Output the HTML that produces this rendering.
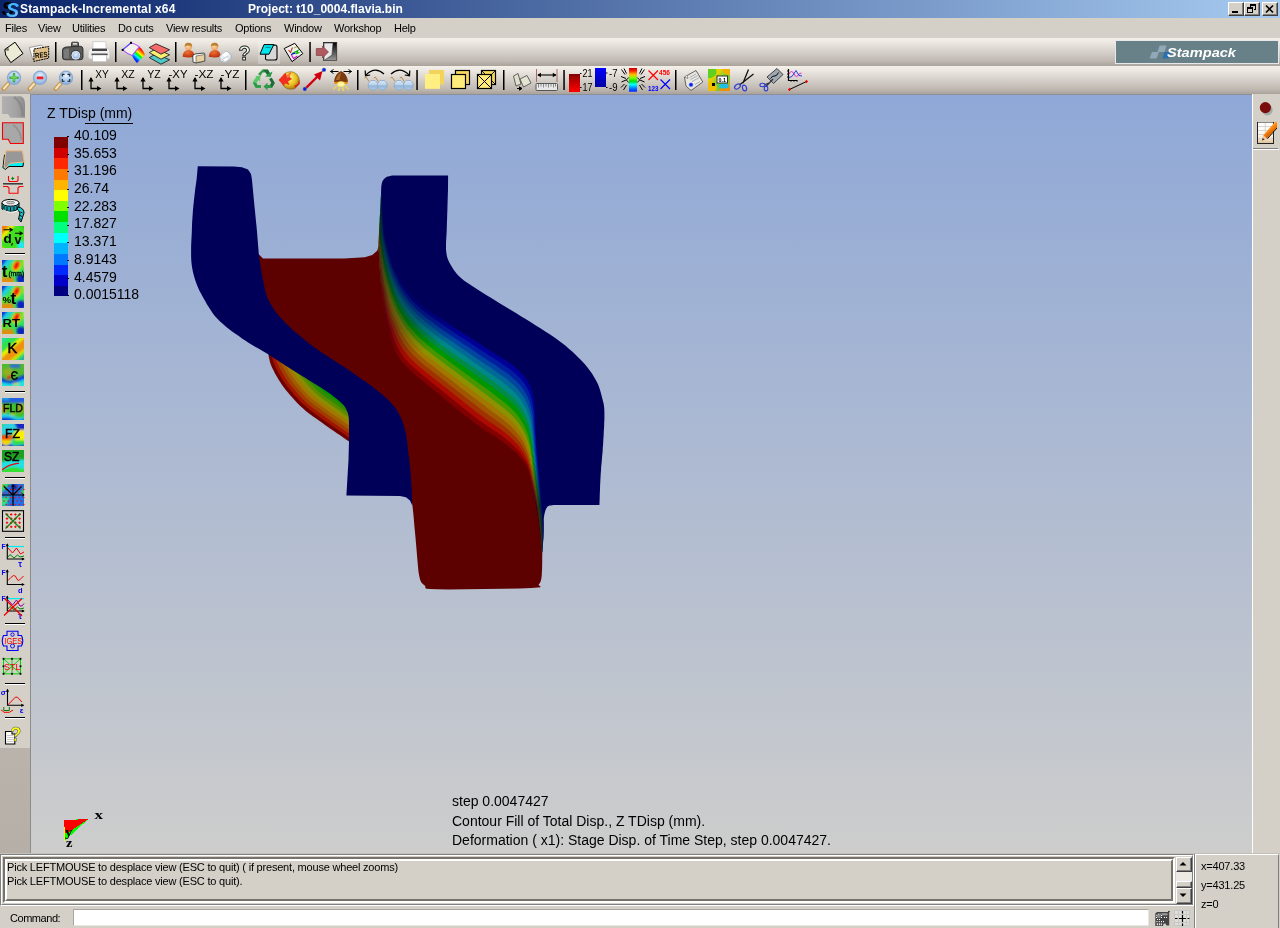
<!DOCTYPE html>
<html><head><meta charset="utf-8"><title>Stampack-Incremental x64</title>
<style>
*{box-sizing:border-box;margin:0;padding:0}
html,body{width:1280px;height:928px;overflow:hidden;background:#d4d0c8;font-family:"Liberation Sans",sans-serif;}
body{position:relative}
.abs{position:absolute}
body>div{will-change:transform}
#title{left:0;top:0;width:1280px;height:18px;background:linear-gradient(90deg,#0a246a 0%,#a6caf0 100%);}
#title .t{position:absolute;top:2px;color:#fff;font-weight:bold;font-size:12px;line-height:14px;white-space:nowrap}
#menu{left:0;top:18px;width:1280px;height:20px;background:#d4d0c8;font-size:11px;color:#000}
#menu span{position:absolute;top:4px;line-height:13px;white-space:nowrap;letter-spacing:-0.25px}
.tb{left:0;width:1280px;height:28px;background:linear-gradient(180deg,#f4f0ea 0%,#ebe7e0 18%,#d5d0c9 50%,#bfb9b2 82%,#aaa39c 100%)}
#tb1{top:38px}
#tb2{top:66px}
#left{left:0;top:94px;width:31px;height:759px;background:linear-gradient(180deg,#d4d0c8 0,#d4d0c8 654px,#b9b3ab 654px,#b5afa7 100%);border-right:1px solid #8c8c8c}
#right{left:1252px;top:94px;width:28px;height:759px;background:#d4d0c8;border-left:1px solid #fff}
#view{left:31px;top:94px;width:1221px;height:759px;background:linear-gradient(180deg,#8fa8d7 0%,#cdcdcc 100%)}
#bottom{left:0;top:853px;width:1280px;height:75px;background:#d4d0c8}
.vt{position:absolute;font-size:14px;line-height:16px;color:#000;white-space:nowrap}
.msg{font-size:11px;line-height:14px;color:#000;white-space:nowrap;letter-spacing:-0.2px}
.sbtn{background:#d4d0c8;border:1px solid #fff;border-right-color:#404040;border-bottom-color:#404040;box-shadow:inset -1px -1px 0 #808080}
.wbtn{width:16px;height:14px;background:#d4d0c8;border:1px solid #fff;border-right-color:#404040;border-bottom-color:#404040;box-shadow:inset -1px -1px 0 #808080}
.wbtn svg{position:absolute;left:0;top:0}
</style></head><body>
<div id="title" class="abs"><svg class="abs" style="left:0;top:0" width="20" height="18" viewBox="0 0 20 18"><defs><linearGradient id="sg" x1="0" y1="0" x2="1" y2="1"><stop offset="0" stop-color="#38c8ff"/><stop offset=".6" stop-color="#48b0ff"/><stop offset="1" stop-color="#a8e0ff"/></linearGradient></defs>
<text x="1.5" y="15" font-family="Liberation Sans,sans-serif" font-weight="bold" font-style="italic" font-size="19" fill="#000" textLength="12.5" lengthAdjust="spacingAndGlyphs">S</text>
<text x="6" y="16.8" font-family="Liberation Sans,sans-serif" font-weight="bold" font-style="italic" font-size="21" fill="url(#sg)" textLength="13" lengthAdjust="spacingAndGlyphs">S</text></svg>
<div class="abs wbtn" style="left:1228px;top:2px"><svg width="14" height="12" viewBox="0 0 14 12" shape-rendering="crispEdges"><rect x="3" y="8" width="6" height="2" fill="#000"/></svg></div>
<div class="abs wbtn" style="left:1244px;top:2px"><svg width="14" height="12" viewBox="0 0 14 12" shape-rendering="crispEdges"><path d="M5 1h6v2h-6zM5 3h1v2h-1zM10 3h1v4h-2v-1h1zM2 4h6v2h-6zM2 6h1v4h-1zM7 6h1v4h-1zM2 9h6v1h-6z" fill="#000"/></svg></div>
<div class="abs wbtn" style="left:1262px;top:2px"><svg width="14" height="12" viewBox="0 0 14 12"><path d="M3 2.5 L10 9.5 M10 2.5 L3 9.5" stroke="#000" stroke-width="1.7"/></svg></div>
<span class="t" style="left:20px;letter-spacing:0.17px">Stampack-Incremental x64</span><span class="t" style="left:248px;letter-spacing:0.03px">Project: t10_0004.flavia.bin</span></div>
<div id="menu" class="abs"><span style="left:5px">Files</span><span style="left:38px">View</span><span style="left:72px">Utilities</span><span style="left:118px">Do cuts</span><span style="left:166px">View results</span><span style="left:235px">Options</span><span style="left:284px">Window</span><span style="left:334px">Workshop</span><span style="left:394px">Help</span></div>
<div id="tb1" class="abs tb"><svg class="abs" style="left:0;top:0" width="1280" height="28" viewBox="0 38 1280 28">
<defs>
<linearGradient id="rbw" gradientUnits="userSpaceOnUse" x1="142.5" y1="50" x2="134" y2="60"><stop offset="0" stop-color="#f00"/><stop offset=".2" stop-color="#ff8000"/><stop offset=".35" stop-color="#ff0"/><stop offset=".5" stop-color="#0e0"/><stop offset=".65" stop-color="#0ff"/><stop offset=".8" stop-color="#06f"/><stop offset="1" stop-color="#00f"/></linearGradient>
<linearGradient id="door" x1="0" y1="0" x2="0" y2="1"><stop offset="0" stop-color="#000"/><stop offset="1" stop-color="#999"/></linearGradient>
<radialGradient id="skin" cx=".4" cy=".4" r=".7"><stop offset="0" stop-color="#ffd8a8"/><stop offset="1" stop-color="#e89858"/></radialGradient>
<radialGradient id="shirt" cx=".4" cy=".3" r=".8"><stop offset="0" stop-color="#f07030"/><stop offset="1" stop-color="#b02808"/></radialGradient>
<radialGradient id="lens" cx=".5" cy=".4" r=".6"><stop offset="0" stop-color="#e8f2ff"/><stop offset="1" stop-color="#7fa8e0"/></radialGradient>
</defs>
<path d="M15 42.2 L23 53.5 L10.8 62.6 L5.7 55 L4.8 49.5 Z" fill="#ebebd6" stroke="#000" stroke-width="1"/>
<path d="M5 49.5 L8.3 50.2 L7.6 47" fill="none" stroke="#000" stroke-width=".7"/>
<path d="M29.3 47.6 L41 45.2 L43 46.5 L43 58 L33 60Z" fill="#fff" stroke="#888" stroke-width=".8"/>
<path d="M34 49 L48.7 46.5 L48.7 58.2 L33.8 61.4Z" fill="#e0bf88" stroke="#000" stroke-width="1" stroke-dasharray="2 0.7"/>
<text x="35" y="57.6" font-family="Liberation Sans,sans-serif" font-weight="bold" font-size="7.5" fill="#000" textLength="12.5" lengthAdjust="spacingAndGlyphs" transform="rotate(-6 41 55)">RES</text>
<rect x="55.0" y="42" width="1.5" height="20" fill="#000"/>
<rect x="71.5" y="42.2" width="7" height="5.5" rx="1" fill="#6a6a6a" stroke="#222" stroke-width=".8"/>
<rect x="73" y="43" width="4" height="1.6" fill="#ddd"/>
<path d="M62.5 50 Q62.5 47.5 66 47 L80 46.2 Q83 46.2 83 49 L83 57.5 Q83 59.8 80 59.8 L65.5 59.8 Q62.5 59.8 62.5 57.5Z" fill="#5a5a5a" stroke="#222" stroke-width=".8"/>
<path d="M63.5 50 Q66 48 69 48.5 L69 58.5 L64 58.5Z" fill="#7a7a7a"/>
<circle cx="75.8" cy="55" r="5" fill="#333"/><circle cx="75.8" cy="55.3" r="4" fill="url(#lens)" stroke="#fff" stroke-width=".8"/>
<rect x="93" y="41.8" width="13" height="7.5" fill="#fff" stroke="#bbb" stroke-width=".6"/>
<rect x="88.3" y="48.5" width="21.5" height="10.5" rx="2.5" fill="#eee" stroke="#c8c8c8" stroke-width=".7"/>
<rect x="92" y="48.7" width="15" height="2.3" fill="#444"/>
<rect x="91.5" y="53.6" width="16" height="1.6" fill="#333"/>
<rect x="92.5" y="55" width="14" height="6.8" fill="#fff" stroke="#aaa" stroke-width=".6"/>
<rect x="115.0" y="42" width="1.5" height="20" fill="#000"/>
<path d="M132 55.5 L139.3 46.8 Q143.5 50 144.8 55 L137 63 Q133.5 59.5 132 55.5Z" fill="url(#rbw)"/>
<path d="M122.6 49.8 L131 42.8 Q136 44 139.3 46.8 L132 55.5 Q127 53.5 122.6 49.8Z" fill="#f4f0ea" stroke="#b050ff" stroke-width="1.1"/>
<path d="M122.6 49.8 L131 42.8" stroke="#5050ff" stroke-width="1.1"/>
<rect x="121.7" y="48.9" width="2" height="2" fill="#000"/><rect x="130" y="41.8" width="2" height="2" fill="#000"/>
<path d="M156 53.8 L169.6 59.8 L161 64.2 L149.3 57.6Z" fill="#50c8c8" stroke="#222" stroke-width=".9"/>
<path d="M156 48.8 L169.6 54.8 L161 59.2 L149.3 52.6Z" fill="#f8f070" stroke="#222" stroke-width=".9"/>
<path d="M156 43.8 L169.6 49.8 L161 54.2 L149.3 47.6Z" fill="#f86a6a" stroke="#222" stroke-width=".9"/>
<rect x="175.0" y="42" width="1.5" height="20" fill="#000"/>
<path d="M182.6 56.8 Q183.0 50 188.6 50 Q194.2 50 194.6 56.8 Q188.6 58.2 182.6 56.8Z" fill="url(#shirt)"/>
<circle cx="188.4" cy="46.6" r="3.7" fill="url(#skin)"/>
<path d="M184.6 46.5 Q185.0 42.3 188.6 42.8 Q192.0 42.6 192.2 46.8 Q188.5 44.5 184.6 46.5Z" fill="#b8822c"/>
<path d="M208.8 56.8 Q209.2 50 214.8 50 Q220.4 50 220.8 56.8 Q214.8 58.2 208.8 56.8Z" fill="url(#shirt)"/>
<circle cx="214.6" cy="46.6" r="3.7" fill="url(#skin)"/>
<path d="M210.8 46.5 Q211.2 42.3 214.8 42.8 Q218.2 42.6 218.4 46.8 Q214.7 44.5 210.8 46.5Z" fill="#b8822c"/>
<path d="M192.8 55.5 L195 54 L204 53 L204.8 54.5 L204.8 61 L196 63 L193 62Z" fill="#fff" stroke="#222" stroke-width=".8"/>
<path d="M196 56 L204.6 54.5 L204.6 61 L196 62.7Z" fill="#e8d0a0" stroke="#444" stroke-width=".6"/>
<path d="M219.5 56 L227 51 L231 55 L231 59 L225 63 L220.5 60.5Z" fill="#e6eef4" stroke="#9ab" stroke-width=".7"/>
<path d="M222 54.5 L226.5 51.5 L229 54 L224.5 57Z" fill="#fff"/>
<path d="M222.5 59.5 L227.5 56.5 L229.5 59 L225 62Z" fill="#fff" stroke="#99a" stroke-width=".5"/>
<text x="238.6" y="60.2" font-family="Liberation Sans,sans-serif" font-weight="bold" font-size="21" fill="#f4fff4" stroke="#222" stroke-width="1" textLength="12" lengthAdjust="spacingAndGlyphs">?</text>
<rect x="258" y="41" width="22" height="23" fill="#fff" opacity=".22"/>
<path d="M266 46 L275 45 Q277 45 277 47 L277 58 Q277 60 275 60 L267 60 Q265.5 60 265.5 58.5Z" fill="#d8d8d8" stroke="#000" stroke-width="1.1"/>
<path d="M264 44.6 L273.8 44.6 L269 54.2 L260 54.2Z" fill="#00e6ee" stroke="#000" stroke-width="1"/>
<path d="M265.5 47.3 L270.5 47.3" stroke="#088" stroke-width="1"/>
<path d="M294.8 43.3 L302.8 53.6 L292 61.6 L284.2 48.5Z" fill="#f0f0e8" stroke="#000" stroke-width="1"/>
<path d="M288.5 50 L290.5 52.5 L292.5 47.5" fill="none" stroke="#c03030" stroke-width="1.1"/>
<path d="M294 48 L297 46.5" stroke="#a0a040" stroke-width="1"/>
<path d="M292 53.5 L298 50.5 L296.5 53.5 L299.5 52.5" fill="none" stroke="#00b000" stroke-width="1.1"/>
<path d="M291.5 55 L293.5 58.5 L297.5 56" fill="none" stroke="#d000d0" stroke-width="1.1"/>
<path d="M291 54.5 L295.5 53" fill="none" stroke="#0000e0" stroke-width="1.1"/>
<rect x="309.3" y="42" width="1.5" height="20" fill="#000"/>
<rect x="323.5" y="42.3" width="13.3" height="18" fill="url(#door)" stroke="#222" stroke-width=".6"/>
<path d="M324 43 L333 43 L332 55 L324 60.5Z" fill="#e8e8e8" stroke="#333" stroke-width=".6"/>
<path d="M316.3 48.5 L322.5 48.5 L322.5 46 L328.5 52 L322.5 58 L322.5 55.5 L316.3 55.5Z" fill="#b05a60" stroke="#7a3038" stroke-width=".6"/>
<rect x="1115.5" y="40.5" width="163" height="23" fill="#688088" stroke="#e8e8e8" stroke-width="1"/>
<path d="M1159.5 45.5 L1166.5 45.5 L1164.5 52 L1157.5 52Z" fill="#90a8b8"/><path d="M1152 52 L1159 52 L1156.5 58.5 L1149.5 58.5Z" fill="#90a8b8"/><path d="M1164.5 52 L1171 52 L1168.5 58.5 L1162.5 58.5Z" fill="#2a70b0"/>
<text x="1167" y="57.3" font-family="Liberation Sans,sans-serif" font-weight="bold" font-style="italic" font-size="13.2" fill="#fff" textLength="69" lengthAdjust="spacingAndGlyphs">Stampack</text>
</svg></div>
<div id="tb2" class="abs tb"><svg class="abs" style="left:0;top:0" width="1280" height="28" viewBox="0 66 1280 28">
<defs>
<radialGradient id="glass" cx=".5" cy=".35" r=".65"><stop offset="0" stop-color="#eaf3fc"/><stop offset=".6" stop-color="#a8c8ec"/><stop offset="1" stop-color="#88b0e0"/></radialGradient>
<linearGradient id="redg" x1="0" y1="0" x2="0" y2="1"><stop offset="0" stop-color="#800000"/><stop offset=".5" stop-color="#c80000"/><stop offset="1" stop-color="#ff0000"/></linearGradient>
<linearGradient id="blug" x1="0" y1="0" x2="0" y2="1"><stop offset="0" stop-color="#0000ff"/><stop offset="1" stop-color="#0000a0"/></linearGradient>
<linearGradient id="rb2" x1="0" y1="0" x2="0" y2="1"><stop offset="0" stop-color="#c00000"/><stop offset=".12" stop-color="#ff2000"/><stop offset=".28" stop-color="#ffc000"/><stop offset=".42" stop-color="#80ff00"/><stop offset=".55" stop-color="#00e000"/><stop offset=".7" stop-color="#00ffff"/><stop offset=".85" stop-color="#0080ff"/><stop offset="1" stop-color="#0020ff"/></linearGradient>
<radialGradient id="sph" cx=".4" cy=".35" r=".7"><stop offset="0" stop-color="#ffff80"/><stop offset=".6" stop-color="#e8c020"/><stop offset="1" stop-color="#a07010"/></radialGradient>
<linearGradient id="gl2" x1="0" y1="0" x2="0" y2="1"><stop offset="0" stop-color="#dce8f4"/><stop offset=".5" stop-color="#b8d0e8"/><stop offset=".55" stop-color="#90b4d8"/><stop offset="1" stop-color="#b0cce8"/></linearGradient>
<linearGradient id="cmap" x1="0" y1="0" x2="1" y2="1"><stop offset="0" stop-color="#c8e000"/><stop offset=".3" stop-color="#e8d000"/><stop offset=".6" stop-color="#60d040"/><stop offset="1" stop-color="#f0a000"/></linearGradient>
</defs>
<path d="M8.5 83.5 L3.5 89" stroke="#c89850" stroke-width="4.2" stroke-linecap="round"/>
<path d="M8.0 84 L4.0 88.5" stroke="#f4e4c0" stroke-width="2" stroke-linecap="round"/>
<circle cx="14" cy="77.8" r="6.6" fill="url(#glass)" stroke="#8aa8d0" stroke-width="1.2"/>
<path d="M34.5 83.5 L29.5 89" stroke="#c89850" stroke-width="4.2" stroke-linecap="round"/>
<path d="M34.0 84 L30.0 88.5" stroke="#f4e4c0" stroke-width="2" stroke-linecap="round"/>
<circle cx="40" cy="77.8" r="6.6" fill="url(#glass)" stroke="#8aa8d0" stroke-width="1.2"/>
<path d="M60.5 83.5 L55.5 89" stroke="#c89850" stroke-width="4.2" stroke-linecap="round"/>
<path d="M60.0 84 L56.0 88.5" stroke="#f4e4c0" stroke-width="2" stroke-linecap="round"/>
<circle cx="66" cy="77.8" r="6.6" fill="url(#glass)" stroke="#8aa8d0" stroke-width="1.2"/>
<path d="M14 74.3 V81.3 M10.5 77.8 H17.5" stroke="#38a838" stroke-width="2.6" stroke-linecap="round"/>
<path d="M14 75 V80.6 M11.2 77.8 H16.8" stroke="#80e070" stroke-width="1.1" stroke-linecap="round"/>
<rect x="36.8" y="76.6" width="6.6" height="2.6" rx=".8" fill="#e81828" stroke="#f88" stroke-width=".4"/>
<path d="M62.3 76.5 V74.4 H64.5 M67.5 74.4 H69.7 V76.5 M69.7 79 V81.2 H67.5 M64.5 81.2 H62.3 V79" fill="none" stroke="#222" stroke-width="1.1"/>
<rect x="81.0" y="70" width="1.5" height="20" fill="#000"/>
<path d="M91.0 78 V88.5 H98.0" fill="none" stroke="#000" stroke-width="1.3"/>
<path d="M88.4 81.5 L91.0 77 L93.6 81.5Z M97.0 86 L101.5 88.5 L97.0 91Z" fill="#000"/>
<text x="95.2" y="77.5" font-family="Liberation Sans,sans-serif" font-size="10.5" fill="#000" textLength="13.5" lengthAdjust="spacingAndGlyphs">XY</text>
<path d="M117.0 78 V88.5 H124.0" fill="none" stroke="#000" stroke-width="1.3"/>
<path d="M114.4 81.5 L117.0 77 L119.6 81.5Z M123.0 86 L127.5 88.5 L123.0 91Z" fill="#000"/>
<text x="121.2" y="77.5" font-family="Liberation Sans,sans-serif" font-size="10.5" fill="#000" textLength="13.5" lengthAdjust="spacingAndGlyphs">XZ</text>
<path d="M143.0 78 V88.5 H150.0" fill="none" stroke="#000" stroke-width="1.3"/>
<path d="M140.4 81.5 L143.0 77 L145.6 81.5Z M149.0 86 L153.5 88.5 L149.0 91Z" fill="#000"/>
<text x="147.2" y="77.5" font-family="Liberation Sans,sans-serif" font-size="10.5" fill="#000" textLength="13.5" lengthAdjust="spacingAndGlyphs">YZ</text>
<path d="M169.0 78 V88.5 H176.0" fill="none" stroke="#000" stroke-width="1.3"/>
<path d="M166.4 81.5 L169.0 77 L171.6 81.5Z M175.0 86 L179.5 88.5 L175.0 91Z" fill="#000"/>
<text x="168.5" y="77.5" font-family="Liberation Sans,sans-serif" font-size="10.5" fill="#000" textLength="19" lengthAdjust="spacingAndGlyphs">-XY</text>
<path d="M195.0 78 V88.5 H202.0" fill="none" stroke="#000" stroke-width="1.3"/>
<path d="M192.4 81.5 L195.0 77 L197.6 81.5Z M201.0 86 L205.5 88.5 L201.0 91Z" fill="#000"/>
<text x="194.5" y="77.5" font-family="Liberation Sans,sans-serif" font-size="10.5" fill="#000" textLength="19" lengthAdjust="spacingAndGlyphs">-XZ</text>
<path d="M221.0 78 V88.5 H228.0" fill="none" stroke="#000" stroke-width="1.3"/>
<path d="M218.4 81.5 L221.0 77 L223.6 81.5Z M227.0 86 L231.5 88.5 L227.0 91Z" fill="#000"/>
<text x="220.5" y="77.5" font-family="Liberation Sans,sans-serif" font-size="10.5" fill="#000" textLength="19" lengthAdjust="spacingAndGlyphs">-YZ</text>
<rect x="245.0" y="70" width="1.5" height="20" fill="#000"/>
<path d="M258 74 L262.5 69.5 L268 69.5 L270 73 L272.5 71.5 L270.5 77 L265 76.5 L267 75 L265.5 72.5 L262.5 72.5 L260.5 76Z" fill="#2a9a48"/>
<path d="M263 69.8 L267.8 69.8 L269.6 73 L267.3 74.5 L265.5 72.3Z" fill="#1f6a38"/>
<path d="M271.5 77.5 L274.8 83 L272 88 L267.5 88 L267.5 90.5 L263.5 86.5 L267.5 82.8 L267.5 85 L270 85 L271.3 82.8 L269 79Z" fill="#2a9a48"/>
<path d="M271.8 78 L274.6 83 L272 87.5 L270.2 85 L271.5 82.8 L269.5 79.5Z" fill="#1f6a38"/>
<path d="M256.5 76.5 L252.5 82.5 L255.5 88 L261 88 L261 85 L257.5 85 L256.5 82.8 L258.5 80 L260 81.5 L260.5 75.8 L255 76 Z" fill="#58c868"/>
<path d="M253 82.8 L255.7 87.7 L261 87.7 L261 85.2 L257.3 85.2 L256.2 82.8Z" fill="#2a9a48"/>
<circle cx="290.5" cy="80.5" r="8.8" fill="url(#sph)" stroke="#806010" stroke-width=".6"/>
<path d="M278.5 80 L285.5 72.5 L286.5 75.5 L291 72 L289.5 77 L292 79 L288 81.5 L289.5 85 L285 83.5 L284 86Z" fill="#f03020"/>
<path d="M285.5 72.5 L286.5 75.5 L291 72 L289.5 77 L287 78Z" fill="#ff7840"/>
<path d="M291.5 91.5 L299.8 84 L299.5 79.5 L297.5 84 L294 86 L296 88Z" fill="#d82818"/>
<path d="M305.5 88.5 L318 76" stroke="#d00010" stroke-width="2.4"/>
<path d="M314 74.5 L322.5 71 L320 80.5 Z" fill="#d00010"/>
<path d="M322 71.5 L324 69.8" stroke="#222" stroke-width="1"/>
<circle cx="304.8" cy="89" r="1.9" fill="#0020e0" stroke="#88a" stroke-width=".5"/><circle cx="324" cy="69.8" r="1.9" fill="#0020e0" stroke="#88a" stroke-width=".5"/>
<path d="M330.5 71.5 H338.5 M343.5 71.5 H351.5 M330.5 71.5 l3 -2 M330.5 71.5 l3 2 M351.5 71.5 l-3 -2 M351.5 71.5 l-3 2" stroke="#000" stroke-width="1" fill="none"/>
<path d="M334 82 Q334.5 74 341 71 Q347.5 74 348 82 Z" fill="#7a3a10"/>
<path d="M336 80 Q337 75 341 72.5 Q340 77 339.5 80Z" fill="#b06828"/>
<rect x="334.5" y="81.8" width="13" height="2" fill="#f08000"/>
<ellipse cx="341" cy="84.2" rx="3.8" ry="2.6" fill="#fff8a0" stroke="#f0d040" stroke-width=".6"/>
<path d="M336.5 86 L333.5 89.5 M339.5 87.5 L338.5 91 M342.5 87.5 L343.5 91 M345.5 86 L348.5 89.5" stroke="#ffe030" stroke-width="1.1"/>
<rect x="357.0" y="70" width="1.5" height="20" fill="#000"/>
<path d="M366.0 75 Q375.0 66 384.0 74" fill="none" stroke="#000" stroke-width="1.2"/>
<path d="M365.2 70.5 L365.5 75.8 L370.2 75" fill="none" stroke="#000" stroke-width="1.2"/>
<path d="M364.5 78 l1.5 -1 l3 4.5" fill="none" stroke="#b88848" stroke-width="1"/>
<path d="M373.8 78 l1.5 -1 l3 4.5" fill="none" stroke="#b88848" stroke-width="1"/>
<path d="M371.0 80.5 h4 l2.7 2.7 v4 l-2.7 2.7 h-4 l-2.7 -2.7 v-4Z" fill="url(#gl2)" stroke="#88a8cc" stroke-width=".8"/>
<path d="M380.3 80.5 h4 l2.7 2.7 v4 l-2.7 2.7 h-4 l-2.7 -2.7 v-4Z" fill="url(#gl2)" stroke="#88a8cc" stroke-width=".8"/>
<path d="M391.0 74 Q400.0 66 409.0 75" fill="none" stroke="#000" stroke-width="1.2"/>
<path d="M409.8 70.5 L409.5 75.8 L404.8 75" fill="none" stroke="#000" stroke-width="1.2"/>
<path d="M390.5 78 l1.5 -1 l3 4.5" fill="none" stroke="#b88848" stroke-width="1"/>
<path d="M399.8 78 l1.5 -1 l3 4.5" fill="none" stroke="#b88848" stroke-width="1"/>
<path d="M397.0 80.5 h4 l2.7 2.7 v4 l-2.7 2.7 h-4 l-2.7 -2.7 v-4Z" fill="url(#gl2)" stroke="#88a8cc" stroke-width=".8"/>
<path d="M406.3 80.5 h4 l2.7 2.7 v4 l-2.7 2.7 h-4 l-2.7 -2.7 v-4Z" fill="url(#gl2)" stroke="#88a8cc" stroke-width=".8"/>
<rect x="416.3" y="70" width="1.5" height="20" fill="#000"/>
<rect x="429" y="70" width="15" height="14.5" fill="#f2d45a"/><rect x="425" y="74" width="15" height="14.8" fill="#ffee82"/>
<rect x="455.5" y="70.5" width="14" height="14" fill="#f6d860" stroke="#000" stroke-width="1.2"/><rect x="451.5" y="74.5" width="14" height="14" fill="#ffea7a" stroke="#000" stroke-width="1.2"/>
<rect x="481.5" y="70.5" width="14" height="14" fill="#f6d860" stroke="#000" stroke-width="1.2"/><path d="M481.5 70.5 L495.5 84.5 M495.5 70.5 L488 78" stroke="#000" stroke-width=".9"/><rect x="477.5" y="74.5" width="14" height="14" fill="#ffea7a" stroke="#000" stroke-width="1.2"/><path d="M477.5 74.5 L491.5 88.5 M491.5 74.5 L477.5 88.5" stroke="#000" stroke-width="1"/>
<rect x="503.0" y="70" width="1.5" height="20" fill="#000"/>
<path d="M513.5 76 L518 73.5 L521 84 L516 86Z" fill="#e0e0cc" stroke="#444" stroke-width=".8"/>
<path d="M520 79 L527 75.5 L531 83 L523.5 87Z" fill="#e4e4d0" stroke="#444" stroke-width=".8"/>
<path d="M517 88.5 H521 M519.5 86.8 L522 88.5 L519.5 90.2Z" stroke="#000" stroke-width="1" fill="#000"/>
<path d="M536.5 69 V82 M557 69 V82" stroke="#a06060" stroke-width=".9"/>
<path d="M538 75 H556" stroke="#000" stroke-width="1.1"/><path d="M537.2 75 L541 72.8 V77.2Z M556.5 75 L552.8 72.8 V77.2Z" fill="#000"/>
<rect x="536" y="83.5" width="21.5" height="7" rx="1" fill="#e8e8e8" stroke="#555" stroke-width="1"/>
<path d="M538.5 84 v3.5 M541 84 v2.5 M543.5 84 v3.5 M546 84 v2.5 M548.5 84 v3.5 M551 84 v2.5 M553.5 84 v3.5 M555.5 84 v2.5" stroke="#888" stroke-width="1"/>
<rect x="563.3" y="70" width="1.5" height="20" fill="#000"/>
<rect x="569" y="74" width="11" height="18" fill="url(#redg)"/>
<rect x="595" y="68" width="11" height="19" fill="url(#blug)"/>
<text x="582.5" y="76.6" font-family="Liberation Sans,sans-serif" font-size="10" fill="#000" textLength="10.0" lengthAdjust="spacingAndGlyphs">21</text>
<text x="582.5" y="90.8" font-family="Liberation Sans,sans-serif" font-size="10" fill="#000" textLength="10.0" lengthAdjust="spacingAndGlyphs">17</text>
<text x="609.0" y="76.6" font-family="Liberation Sans,sans-serif" font-size="10" fill="#000" textLength="8.5" lengthAdjust="spacingAndGlyphs">-7</text>
<text x="609.0" y="91.0" font-family="Liberation Sans,sans-serif" font-size="10" fill="#000" textLength="8.5" lengthAdjust="spacingAndGlyphs">-9</text>
<rect x="580" y="73" width="1.5" height="1" fill="#000"/><rect x="580" y="87" width="1.5" height="1" fill="#000"/><rect x="606" y="72.5" width="1.5" height="1" fill="#000"/><rect x="606" y="87" width="1.5" height="1" fill="#000"/>
<rect x="629" y="68" width="8" height="23.7" fill="url(#rb2)"/>
<path d="M621.5 69.5 L625 74.5 M624 68.5 L626.5 73.5 M621 76.5 L626 78.5 M621.5 82 L626 80 M621 87.5 L624.5 84 M623.5 90 L626.5 85 M628.8 77.5 L626.3 80 L628.8 82.5" stroke="#000" stroke-width="1" fill="none"/>
<path d="M644.5 69.5 L641 74.5 M642 68.5 L639.5 73.5 M645 76.5 L640 78.5 M644.5 82 L640 80 M645 87.5 L641.5 84 M642.5 90 L639.5 85 M637.2 77.5 L639.7 80 L637.2 82.5" stroke="#000" stroke-width="1" fill="none"/>
<path d="M648.5 70.5 L658 80 M658 70.5 L648.5 80" stroke="#f00" stroke-width="1.2"/>
<path d="M660.5 79.5 L670 89 M670 79.5 L660.5 89" stroke="#00f" stroke-width="1.2"/>
<text x="659.0" y="75.3" font-family="Liberation Sans,sans-serif" font-size="6.5" fill="#f00" textLength="11.0" lengthAdjust="spacingAndGlyphs" font-weight="bold">456</text>
<text x="648.0" y="90.5" font-family="Liberation Sans,sans-serif" font-size="6.5" fill="#00f" textLength="10.5" lengthAdjust="spacingAndGlyphs" font-weight="bold">123</text>
<rect x="675.0" y="70" width="1.5" height="20" fill="#000"/>
<path d="M684.5 77 L696 70.5 L702.8 82 L691 90.5 L686 86Z" fill="#e8e8e0" stroke="#555" stroke-width=".9"/>
<path d="M689.5 77.5 L696 74 M690.5 79.5 L697.5 75.8 M692 81.5 L699 77.8 M695 84.5 L700 81.5" stroke="#99a" stroke-width=".8"/>
<path d="M684.8 77.2 L688 78.5 L687 75.6" fill="#fff" stroke="#555" stroke-width=".6"/>
<circle cx="691" cy="84.8" r="2" fill="#0020f0" stroke="#88f" stroke-width=".5"/>
<rect x="708" y="69" width="22" height="22" fill="url(#cmap)"/>
<path d="M708 69 h8 q2 5 -3 8 q-3 2 -5 1Z" fill="#60d020"/><path d="M722 69 h8 v6 q-5 1 -8 -6Z" fill="#f0b000"/><path d="M708 82 q5 -2 8 3 q2 4 -1 6 h-7Z" fill="#f0c000"/><path d="M719 91 q3 -5 11 -4 v4Z" fill="#f09000"/><ellipse cx="724" cy="86" rx="5" ry="2.5" fill="#20c0e0"/>
<rect x="717" y="76" width="10.5" height="7" fill="#fff" stroke="#333" stroke-width="1"/>
<text x="718.5" y="82.0" font-family="Liberation Sans,sans-serif" font-size="6" fill="#000" textLength="7.5" lengthAdjust="spacingAndGlyphs" font-weight="bold">0.1</text>
<rect x="712" y="83" width="3" height="3" fill="#000"/>
<path d="M748.5 69.5 L743 83 M753.5 74 L739.5 85" stroke="#111" stroke-width="1.3" fill="none"/>
<ellipse cx="737.5" cy="86.5" rx="3.2" ry="2" fill="none" stroke="#3040d0" stroke-width="1.2" transform="rotate(-35 737.5 86.5)"/><ellipse cx="744.5" cy="88" rx="2" ry="3" fill="none" stroke="#3040d0" stroke-width="1.2" transform="rotate(-15 744.5 88)"/>
<path d="M767 77 L777 68.5 L783 74.5 L773.5 83.5Z" fill="#a0a8b0" stroke="#333" stroke-width=".9"/>
<path d="M770.5 78.5 q2 -3 4 -2.5 t4 -3.5" fill="none" stroke="#000" stroke-width="1"/>
<path d="M773 79 L766 86.5 M770 82.5 L764 85" stroke="#334" stroke-width="1.2"/>
<ellipse cx="762.5" cy="85" rx="2.6" ry="1.7" fill="none" stroke="#3040d0" stroke-width="1.1"/><ellipse cx="766" cy="88.5" rx="1.8" ry="2.4" fill="none" stroke="#3040d0" stroke-width="1.1"/>
<path d="M788.5 69 V80.5 H797.5" fill="none" stroke="#000" stroke-width="1.2"/>
<path d="M787 71 h1.5 M787 74 h1.5 M787 77 h1.5 M791 80.5 v1.3 M794 80.5 v1.3 M797 80.5 v1.3" stroke="#000" stroke-width=".9"/>
<path d="M789 74 q2.5 -5 5 0 t5 0 l2.5 -1" fill="none" stroke="#f020d0" stroke-width="1"/>
<path d="M789 77.5 l3 -1 l4 -6 l3 5 l3 .5" fill="none" stroke="#2040f0" stroke-width="1"/>
<path d="M789.5 89.5 L806.5 81.5" stroke="#000" stroke-width="1"/><path d="M789.5 87.8 l1.5 1.7 l-1.5 1.7 l-1.5 -1.7Z M806.5 79.8 l1.5 1.7 l-1.5 1.7 l-1.5 -1.7Z" fill="#f00000"/>
</svg></div>
<div id="left" class="abs"><svg class="abs" style="left:0;top:0" width="31" height="759" viewBox="0 94 31 759">
<defs>
<filter id="bl" x="-20%" y="-20%" width="140%" height="140%"><feGaussianBlur stdDeviation="1.3"/></filter>
<filter id="bl2" x="-20%" y="-20%" width="140%" height="140%"><feGaussianBlur stdDeviation=".8"/></filter>
<clipPath id="c22"><rect x="0" y="0" width="22" height="22"/></clipPath>
<linearGradient id="gry" x1="0" y1="0" x2="1" y2="0"><stop offset="0" stop-color="#b0b0b0"/><stop offset=".6" stop-color="#a4a4a4"/><stop offset="1" stop-color="#8c8c8c"/></linearGradient>
<g id="cb1" clip-path="url(#c22)"><rect width="22" height="22" fill="#30e060"/><g filter="url(#bl)">
<path d="M-3 -3 H8 L-3 10Z" fill="#1040e0"/><path d="M8 -3 H14 L-3 16 V10Z" fill="#20d0e0"/>
<path d="M-3 26 V17.5 L11 17 L13 26Z" fill="#e09010"/><path d="M-3 12 L6 9 L10 15 L-3 17Z" fill="#60e020"/><ellipse cx="14.5" cy="6" rx="4.5" ry="6" fill="#f0f000" transform="rotate(25 14.5 6)"/>
<ellipse cx="14.5" cy="5.5" rx="3" ry="5" fill="#f01808" transform="rotate(25 14.5 5.5)"/>
<ellipse cx="19" cy="19" rx="4.5" ry="4.5" fill="#1020c0"/><path d="M20 -3 h6 v12 h-4Z" fill="#e0e020"/></g></g>
</defs>
<path d="M2 96.2 H21 Q25 98 25 104 V117.7 H10.5 L8 114 H2Z" fill="url(#gry)"/>
<path d="M14 97 Q22 102 23 116" fill="none" stroke="#808080" stroke-width="2.5" opacity=".6"/>
<path d="M2.5 122.8 H23.3 V143.5 H10.5 L8.2 139.3 H2.5Z" fill="#a8a8a8" stroke="#f00000" stroke-width="1.1"/>
<path d="M13 125 Q20 129 21.5 140" fill="none" stroke="#8a8a8a" stroke-width="1.8" opacity=".7"/>
<path d="M4.5 155 L3 167.5 L5 169.5 L9 166.5 L23 166.5 L23.5 162Z" fill="#00f0f8" stroke="#000" stroke-width="1"/>
<path d="M6 150.8 H22.5 L24.3 162 L10 163.3 L5.5 168.5 L4 166 L5 158Z" fill="#989898" stroke="#f8b878" stroke-width="1"/>
<path d="M8.5 176 V180.5 L9.5 181.5 H17 L18 180.5 V176" fill="none" stroke="#f00" stroke-width="1.1"/>
<path d="M12.7 176.8 V180 M11.2 178.4 H14.2" stroke="#008000" stroke-width="1"/>
<rect x="3" y="183.3" width="20" height="1.1" fill="#000"/>
<path d="M3 186.5 H7.5 L9 188 V193.3 H18 V188 L19.5 186.5 H23.5" fill="none" stroke="#f00" stroke-width="1.1"/>
<path d="M2 203 V209 Q10 214 19 209 V203Z" fill="#10a0a8" stroke="#000" stroke-width="1"/>
<path d="M18 207 Q24 208 24 213 L21 222 L18.5 219 L20 213 Q19 210 17 210Z" fill="#20c8d0" stroke="#000" stroke-width="1"/>
<path d="M3 209.5 Q10 214.5 18 210.5" fill="none" stroke="#fff" stroke-width="1"/>
<ellipse cx="10.5" cy="202.8" rx="8.6" ry="3.4" fill="#f0f0f0" stroke="#000" stroke-width="1"/>
<ellipse cx="10.5" cy="202.6" rx="4" ry="1.3" fill="#c8c8c8" stroke="#555" stroke-width=".6"/>
<path d="M4 206 v3.5 M7 207 v3.5 M10.5 207.3 v3.5 M14 207 v3.5 M17 206 v3.5 M20.5 212 l2 1 M20 215.5 l2 1 M19.5 218.5 l1.5 1" stroke="#000" stroke-width=".9"/>
<g transform="translate(2 226)" clip-path="url(#c22)"><rect width="22" height="22" fill="#40e020"/><g filter="url(#bl)"><path d="M-3 -3 H10 L-3 12Z" fill="#f08010"/><path d="M10 -3 H15 L-3 18 V12Z" fill="#f0f000"/><path d="M-3 18 L4 25 H-3Z" fill="#f0e000"/><ellipse cx="19" cy="19" rx="4" ry="4.5" fill="#20e8f0"/><path d="M16 -3 h9 v8Z" fill="#20c020"/></g></g>
<text x="3.6" y="243.3" font-family="Liberation Sans,sans-serif" font-weight="bold" font-size="13.5" fill="#000">d</text>
<text x="14.5" y="243.5" font-family="Liberation Sans,sans-serif" font-weight="bold" font-size="12.5" fill="#000">v</text>
<path d="M3.5 229.8 H12 M9.5 228 L12.3 229.8 L9.5 231.6 M15 233.3 H22 M19.5 231.6 L22.3 233.3 L19.5 235 M12.5 243 L11.5 245.5" fill="none" stroke="#000" stroke-width="1.1"/>
<rect x="5" y="253" width="20" height="1" fill="#000"/><rect x="5" y="254" width="20" height="1" fill="#fff"/>
<use href="#cb1" x="2" y="260"/>
<text x="1.8" y="277" font-family="Liberation Sans,sans-serif" font-weight="bold" font-size="17" fill="#000">t</text>
<text x="8.6" y="276.3" font-family="Liberation Sans,sans-serif" font-size="8" fill="#000" stroke="#000" stroke-width=".3" textLength="15.5" lengthAdjust="spacingAndGlyphs">(mm)</text>
<use href="#cb1" x="2" y="286"/>
<text x="2.6" y="303" font-family="Liberation Sans,sans-serif" font-size="9.5" font-weight="bold" fill="#000" textLength="8.6" lengthAdjust="spacingAndGlyphs">%</text>
<text x="10.5" y="303.5" font-family="Liberation Sans,sans-serif" font-weight="bold" font-size="17" fill="#000">t</text>
<use href="#cb1" x="2" y="312"/>
<text x="2.6" y="327" font-family="Liberation Sans,sans-serif" font-weight="bold" font-size="11.5" fill="#000" textLength="17.5" lengthAdjust="spacingAndGlyphs">RT</text>
<g transform="translate(2 338)" clip-path="url(#c22)"><rect width="22" height="22" fill="#30e050"/><g filter="url(#bl)"><path d="M-3 22 L25 -2 L26 8 L4 26Z" fill="#f09010"/><path d="M-3 17 L22 -4 L25 -2 L-3 22Z" fill="#f0f000"/><path d="M4 26 L26 8 L26 11 L8 26Z" fill="#e8e800"/><path d="M12 26 L26 14 V26Z" fill="#20b0a0"/><path d="M-3 -3 H12 L-3 8Z" fill="#20e090"/></g></g>
<text x="7.5" y="352.8" font-family="Liberation Sans,sans-serif" font-size="14.5" fill="#000" stroke="#000" stroke-width=".5">K</text>
<g transform="translate(2 364)" clip-path="url(#c22)"><rect width="22" height="22" fill="#50b830"/><g filter="url(#bl)"><path d="M-3 11 Q6 20 14 15 T26 11 V26 H-3Z" fill="#1040e0"/><path d="M-3 17 Q8 22 16 18 T26 16 V26 H-3Z" fill="#20e0e0"/><ellipse cx="14" cy="20" rx="3" ry="1.5" fill="#c0e020"/><ellipse cx="6" cy="8" rx="5" ry="4" fill="#90b020"/><path d="M8 0 h10 v4 h-10Z" fill="#3070d0"/><ellipse cx="7" cy="13" rx="2.4" ry="1.6" fill="#f02010" transform="rotate(-30 7 13)"/></g></g>
<text x="10.6" y="380.4" font-family="Liberation Sans,sans-serif" font-size="13" font-weight="bold" fill="#000" textLength="8" lengthAdjust="spacingAndGlyphs">Є</text>
<rect x="5" y="391" width="20" height="1" fill="#000"/><rect x="5" y="392" width="20" height="1" fill="#fff"/>
<g transform="translate(2 398)" clip-path="url(#c22)"><rect width="22" height="22" fill="#40c030"/><g filter="url(#bl)"><rect x="-3" y="-3" width="28" height="8" fill="#2060e0"/><rect x="-3" y="-3" width="10" height="5" fill="#20a0e0"/><path d="M-3 17 Q6 14 12 18 T26 16 V26 H-3Z" fill="#20d8f0"/><path d="M-3 20 Q6 18 12 21 T26 19 V26 H-3Z" fill="#1830d0"/><ellipse cx="2" cy="11" rx="3" ry="4" fill="#c0a010"/><ellipse cx="19" cy="10" rx="2.5" ry="5" fill="#b0a010"/><ellipse cx="11" cy="16" rx="3" ry="1.5" fill="#a0c010"/></g></g>
<text x="3" y="411.9" font-family="Liberation Sans,sans-serif" font-size="11.5" fill="#000" stroke="#000" stroke-width=".45" textLength="20" lengthAdjust="spacingAndGlyphs">FLD</text>
<g transform="translate(2 424)" clip-path="url(#c22)"><rect width="22" height="22" fill="#30d0e0"/><g filter="url(#bl2)"><path d="M12 -3 H26 V6 H16Z" fill="#1828c0"/><path d="M-3 -3 H4 L-3 6Z" fill="#30e040"/><path d="M14 6 H26 V16 H14 L10 11Z" fill="#f8f000"/><path d="M-3 11 H10 L12 14 L8 16 H-3Z" fill="#f05010"/><path d="M-3 16 H10 L8 20 L4 22 L-3 18Z" fill="#f0d800"/><path d="M-3 18 L4 22 L8 20 L12 22 L26 20 V26 H-3Z" fill="#1828c0"/><path d="M10 16 L26 16 V20 L12 21Z" fill="#30e040"/></g></g>
<text x="5" y="437.6" font-family="Liberation Sans,sans-serif" font-size="13" fill="#000" stroke="#000" stroke-width=".45" textLength="15" lengthAdjust="spacingAndGlyphs">FZ</text>
<g transform="translate(2 450)" clip-path="url(#c22)"><rect width="22" height="22" fill="#20a020"/><g filter="url(#bl2)"><path d="M-3 12 Q10 10 26 9 V26 H-3Z" fill="#20e0e8"/><path d="M-3 22 Q6 16 14 17 L26 20 V26 H-3Z" fill="#30e030"/></g><path d="M0 20 Q6 14.5 17 13.2" fill="none" stroke="#f00000" stroke-width="1.3"/></g>
<text x="4" y="461.4" font-family="Liberation Sans,sans-serif" font-size="13" fill="#000" stroke="#000" stroke-width=".45" textLength="15.5" lengthAdjust="spacingAndGlyphs">SZ</text>
<rect x="5" y="477" width="20" height="1" fill="#000"/><rect x="5" y="478" width="20" height="1" fill="#fff"/>
<g transform="translate(2 484)" clip-path="url(#c22)"><rect width="22" height="22" fill="#2070e8"/><g filter="url(#bl)"><path d="M-3 -3 H4 L-3 5Z" fill="#f0a000"/><path d="M2 -3 H10 L-3 12 V5Z" fill="#30e060"/><path d="M22 4 L26 2 V10 L18 10Z" fill="#40e040"/><path d="M-3 14 L8 12 L4 22 H-3Z" fill="#30e080"/><ellipse cx="12" cy="3" rx="3" ry="3" fill="#1020a0"/></g></g>
<circle cx="4.0" cy="486.0" r=".75" fill="#f00"/><circle cx="8.4" cy="486.0" r=".75" fill="#f00"/><circle cx="12.8" cy="486.0" r=".75" fill="#f00"/><circle cx="17.2" cy="486.0" r=".75" fill="#f00"/><circle cx="21.6" cy="486.0" r=".75" fill="#f00"/><circle cx="6.2" cy="489.5" r=".75" fill="#f00"/><circle cx="10.6" cy="489.5" r=".75" fill="#f00"/><circle cx="15.0" cy="489.5" r=".75" fill="#f00"/><circle cx="19.4" cy="489.5" r=".75" fill="#f00"/><circle cx="23.8" cy="489.5" r=".75" fill="#f00"/><circle cx="4.0" cy="493.0" r=".75" fill="#f00"/><circle cx="8.4" cy="493.0" r=".75" fill="#f00"/><circle cx="12.8" cy="493.0" r=".75" fill="#f00"/><circle cx="17.2" cy="493.0" r=".75" fill="#f00"/><circle cx="21.6" cy="493.0" r=".75" fill="#f00"/><circle cx="6.2" cy="497.5" r=".75" fill="#f00"/><circle cx="10.6" cy="497.5" r=".75" fill="#f00"/><circle cx="15.0" cy="497.5" r=".75" fill="#f00"/><circle cx="19.4" cy="497.5" r=".75" fill="#f00"/><circle cx="23.8" cy="497.5" r=".75" fill="#f00"/><circle cx="4.0" cy="501.0" r=".75" fill="#f00"/><circle cx="8.4" cy="501.0" r=".75" fill="#f00"/><circle cx="12.8" cy="501.0" r=".75" fill="#f00"/><circle cx="17.2" cy="501.0" r=".75" fill="#f00"/><circle cx="21.6" cy="501.0" r=".75" fill="#f00"/><circle cx="6.2" cy="504.5" r=".75" fill="#f00"/><circle cx="10.6" cy="504.5" r=".75" fill="#f00"/><circle cx="15.0" cy="504.5" r=".75" fill="#f00"/><circle cx="19.4" cy="504.5" r=".75" fill="#f00"/><circle cx="23.8" cy="504.5" r=".75" fill="#f00"/>
<path d="M13 485 V506 M2 495 H24 M13 495 L4 486.5 M13 495 L21.5 486.5" stroke="#000" stroke-width="1.2" fill="none"/>
<path d="M11.8 487 L13 484.6 L14.2 487 M22 493.8 L24.2 495 L22 496.2" stroke="#000" stroke-width=".9" fill="none"/>
<rect x="2.5" y="510.7" width="21" height="20.6" fill="#d8d4cc" stroke="#000" stroke-width="1.1"/>
<path d="M7.0 513.3 v2.4 M5.8 514.5 h2.4" stroke="#f00" stroke-width="1"/><path d="M11.2 513.3 v2.4 M10.0 514.5 h2.4" stroke="#f00" stroke-width="1"/><path d="M15.4 513.3 v2.4 M14.2 514.5 h2.4" stroke="#f00" stroke-width="1"/><path d="M19.6 513.3 v2.4 M18.4 514.5 h2.4" stroke="#f00" stroke-width="1"/><path d="M7.0 517.4 v2.4 M5.8 518.6 h2.4" stroke="#f00" stroke-width="1"/><path d="M11.2 517.4 v2.4 M10.0 518.6 h2.4" stroke="#f00" stroke-width="1"/><path d="M15.4 517.4 v2.4 M14.2 518.6 h2.4" stroke="#f00" stroke-width="1"/><path d="M19.6 517.4 v2.4 M18.4 518.6 h2.4" stroke="#f00" stroke-width="1"/><path d="M7.0 521.5 v2.4 M5.8 522.7 h2.4" stroke="#f00" stroke-width="1"/><path d="M11.2 521.5 v2.4 M10.0 522.7 h2.4" stroke="#f00" stroke-width="1"/><path d="M15.4 521.5 v2.4 M14.2 522.7 h2.4" stroke="#f00" stroke-width="1"/><path d="M19.6 521.5 v2.4 M18.4 522.7 h2.4" stroke="#f00" stroke-width="1"/><path d="M7.0 525.6 v2.4 M5.8 526.8 h2.4" stroke="#f00" stroke-width="1"/><path d="M11.2 525.6 v2.4 M10.0 526.8 h2.4" stroke="#f00" stroke-width="1"/><path d="M15.4 525.6 v2.4 M14.2 526.8 h2.4" stroke="#f00" stroke-width="1"/><path d="M19.6 525.6 v2.4 M18.4 526.8 h2.4" stroke="#f00" stroke-width="1"/>
<path d="M5.5 513.5 L20.5 528.5 M20.5 513.5 L5.5 528.5" stroke="#108010" stroke-width="1.3"/>
<rect x="5" y="537" width="20" height="1" fill="#000"/><rect x="5" y="538" width="20" height="1" fill="#fff"/>
<path d="M7.3 544.0 V559.0 H24.0" fill="none" stroke="#000" stroke-width="1.1"/>
<path d="M5.7 546.2 L7.3 543.2 L8.9 546.2 Z M21.8 557.4 L24.8 559.0 L21.8 560.6 Z" fill="#000"/>
<text x="1.6" y="548.6" font-family="Liberation Sans,sans-serif" font-weight="bold" font-size="6.8" fill="#0000f0">F</text>
<path d="M8 546.5 H24" stroke="#00e8f0" stroke-width="1.2"/>
<path d="M8 548 L12.5 553 L16.5 548 L20.5 554 L24 552" fill="none" stroke="#f00000" stroke-width="1"/>
<path d="M8 557 L10 554.5 L14 558 L17.5 555 L20 557 L24 556" fill="none" stroke="#008000" stroke-width="1"/>
<text x="18.3" y="567.3" font-family="Liberation Sans,sans-serif" font-weight="bold" font-size="8.5" fill="#0000f0">τ</text>
<path d="M7.3 570.0 V584.5 H24.0" fill="none" stroke="#000" stroke-width="1.1"/>
<path d="M5.7 572.2 L7.3 569.2 L8.9 572.2 Z M21.8 582.9 L24.8 584.5 L21.8 586.1 Z" fill="#000"/>
<text x="1.6" y="575.4" font-family="Liberation Sans,sans-serif" font-weight="bold" font-size="6.8" fill="#0000f0">F</text>
<path d="M8 580.5 Q11 577 13.5 575.5 Q15.5 575 17 579 Q18 581.5 19.5 580 L23.5 576" fill="none" stroke="#f00000" stroke-width="1"/>
<text x="18.0" y="592.8" font-family="Liberation Sans,sans-serif" font-weight="bold" font-size="7.5" fill="#0000f0">d</text>
<path d="M7.3 596.3 V611.0 H24.0" fill="none" stroke="#000" stroke-width="1.1"/>
<path d="M5.7 598.5 L7.3 595.5 L8.9 598.5 Z M21.8 609.4 L24.8 611.0 L21.8 612.6 Z" fill="#000"/>
<text x="1.6" y="601.3" font-family="Liberation Sans,sans-serif" font-weight="bold" font-size="6.8" fill="#0000f0">F</text>
<path d="M8 598.6 H24" stroke="#00e8f0" stroke-width="1.2"/>
<path d="M8 600 L12.5 605 L16.5 600 L20 606 Q22 607 24 603.5" fill="none" stroke="#8000a0" stroke-width="1"/>
<path d="M8 609 L10 606.5 L14 610 L17.5 607 L20 609 L24 608" fill="none" stroke="#008000" stroke-width="1"/>
<text x="18.3" y="619.2" font-family="Liberation Sans,sans-serif" font-weight="bold" font-size="8.5" fill="#0000f0">τ</text>
<path d="M4.5 598.5 L22 616 M22 598.5 L4 615.5" stroke="#f00000" stroke-width="1.3"/>
<rect x="5" y="623" width="20" height="1" fill="#000"/><rect x="5" y="624" width="20" height="1" fill="#fff"/>
<path d="M7 631.3 H18 V635.5 H21.5 Q24 640.8 21.5 646 H18 V650.5 H7 V646 H3.5 Q1 640.8 3.5 635.5 H7Z" fill="none" stroke="#0000f0" stroke-width="1.1"/>
<circle cx="12.5" cy="634.6" r="1.7" fill="none" stroke="#0000f0" stroke-width=".9"/><circle cx="12.5" cy="646" r="2" fill="none" stroke="#0000f0" stroke-width=".9"/>
<text x="4.3" y="644" font-family="Liberation Sans,sans-serif" font-size="8.6" fill="#f00000" textLength="18" lengthAdjust="spacingAndGlyphs">IGES</text>
<rect x="3.5" y="658.8" width="17" height="15" fill="none" stroke="#00d000" stroke-width="1"/>
<path d="M3.5 658.8 L20.5 673.8 M20.5 658.8 L3.5 673.8 M12 658.8 V673.8" stroke="#00d000" stroke-width=".9"/>
<rect x="2.6" y="657.9" width="1.8" height="1.8" fill="#000"/>
<rect x="11.1" y="657.9" width="1.8" height="1.8" fill="#000"/>
<rect x="19.6" y="657.9" width="1.8" height="1.8" fill="#000"/>
<rect x="2.6" y="665.4" width="1.8" height="1.8" fill="#000"/>
<rect x="19.6" y="665.4" width="1.8" height="1.8" fill="#000"/>
<rect x="2.6" y="672.9" width="1.8" height="1.8" fill="#000"/>
<rect x="11.1" y="672.9" width="1.8" height="1.8" fill="#000"/>
<rect x="19.6" y="672.9" width="1.8" height="1.8" fill="#000"/>
<text x="4" y="669.6" font-family="Liberation Sans,sans-serif" font-size="8.8" fill="#f00000" textLength="16.5" lengthAdjust="spacingAndGlyphs">STL</text>
<rect x="5" y="683" width="20" height="1" fill="#000"/><rect x="5" y="684" width="20" height="1" fill="#fff"/>
<path d="M7.5 689.5 V705.3 H23.5" fill="none" stroke="#000" stroke-width="1.1"/>
<path d="M5.9 691.7 L7.5 688.7 L9.1 691.7 Z M21.3 703.7 L24.3 705.3 L21.3 706.9 Z" fill="#000"/>
<text x="0.8" y="695.3" font-family="Liberation Sans,sans-serif" font-weight="bold" font-size="7.5" fill="#0000f0">σ</text>
<path d="M7.8 705 L15.3 697.2 H17.5 L22 702" fill="none" stroke="#f00000" stroke-width="1"/>
<text x="19.8" y="713.2" font-family="Liberation Sans,sans-serif" font-weight="bold" font-size="8" fill="#0000f0">ε</text>
<path d="M3.8 707 V710.5 H9.3 V707" fill="none" stroke="#008000" stroke-width="1"/>
<path d="M1 710 Q3 711 4 712.3 H9.5 Q11 711 13 710.3" fill="none" stroke="#f00000" stroke-width="1"/>
<rect x="5" y="717" width="20" height="1" fill="#000"/><rect x="5" y="718" width="20" height="1" fill="#fff"/>
<path d="M5.5 731.5 H12 V734 H14.8 V744 H5.5Z" fill="#fff" stroke="#000" stroke-width="1.1"/>
<path d="M7 735.5 H13.5 M7 737.5 H13.5 M7 739.5 H13.5 M7 741.5 H13.5" stroke="#bbb" stroke-width=".8"/>
<text x="10.2" y="741" font-family="Liberation Sans,sans-serif" font-weight="bold" font-size="20" fill="#ffff00" stroke="#555a70" stroke-width=".6" textLength="11" lengthAdjust="spacingAndGlyphs">?</text>
</svg></div>
<div id="right" class="abs"><svg class="abs" style="left:0;top:0" width="27" height="759" viewBox="1253 94 27 759">
<defs><linearGradient id="tbl" x1="0" y1="0" x2="0" y2="1"><stop offset="0" stop-color="#fff"/><stop offset=".6" stop-color="#fbf6ee"/><stop offset="1" stop-color="#dcc098"/></linearGradient>
<linearGradient id="pen" gradientUnits="userSpaceOnUse" x1="1268" y1="126" x2="1273" y2="132"><stop offset="0" stop-color="#ffc070"/><stop offset=".45" stop-color="#ff8c10"/><stop offset="1" stop-color="#d86000"/></linearGradient></defs>
<circle cx="1267.3" cy="110" r="5.4" fill="#a4aaa8"/>
<circle cx="1265.4" cy="107.6" r="5.6" fill="#7a0c0a"/>
<rect x="1257.5" y="122.5" width="16" height="21" fill="url(#tbl)" stroke="#222" stroke-width="1"/>
<path d="M1258 122.5 H1273" stroke="#888" stroke-width="1"/>
<path d="M1258 126.5 H1273 M1258 130.5 H1273 M1258 134.5 H1273 M1258 138.5 H1273 M1265.3 123 V139" stroke="#d0d0d0" stroke-width=".9"/>
<path d="M1275 121.8 L1277 121.8 L1277 127.5 L1267 138.5 L1262 140.5 L1263.5 135.2Z" fill="url(#pen)"/>
<path d="M1277 128 L1267.5 138.6" stroke="#201000" stroke-width="1"/>
<path d="M1263.5 135.2 L1267 138.5 L1262 140.5Z" fill="#f0c8a8"/>
<path d="M1262 140.5 L1262.8 138 L1264.5 139.6Z" fill="#302010"/>
<rect x="1253" y="148" width="25" height="1" fill="#808080"/><rect x="1253" y="149" width="26" height="1" fill="#fff"/>
</svg>
</div>
<div id="view" class="abs"><div class="abs" style="left:0;top:0;width:1221px;height:1px;background:#8c8f98"></div>
<svg class="abs" style="left:0;top:0" width="1221" height="759" viewBox="31 94 1221 759" shape-rendering="geometricPrecision">
<path d="M259.0 254.5 L263.0 258.6 L344.0 258.6 L364.8 257.3 L372.3 255.1 L377.2 250.8 L378.6 246.0 L381.6 192.0 L381.8 195.5 L382.0 199.2 L382.3 202.8 L382.5 206.5 L382.7 210.0 L382.9 213.5 L383.2 216.8 L383.5 220.0 L383.8 222.9 L384.0 225.4 L384.2 227.8 L384.5 230.1 L384.8 232.5 L385.2 235.0 L385.8 237.7 L386.5 240.8 L387.4 244.3 L388.4 248.2 L389.5 252.3 L390.8 256.5 L392.1 260.8 L393.6 265.0 L395.2 269.1 L397.0 273.0 L398.9 276.7 L400.9 280.2 L403.0 283.7 L405.2 287.2 L407.6 290.5 L410.1 293.8 L412.9 296.9 L415.8 300.0 L418.9 302.9 L422.3 305.7 L425.8 308.4 L429.4 311.0 L433.2 313.5 L437.2 316.1 L441.2 318.8 L445.4 321.6 L449.8 324.5 L454.4 327.6 L459.1 330.6 L464.0 333.8 L468.9 336.9 L473.8 340.0 L478.5 343.0 L483.0 345.9 L487.4 348.8 L491.9 351.6 L496.4 354.4 L500.8 357.2 L504.9 359.8 L508.8 362.5 L512.4 365.0 L515.5 367.4 L518.2 369.7 L520.4 371.8 L522.3 373.7 L523.9 375.7 L525.4 377.6 L526.6 379.5 L527.8 381.5 L529.0 383.6 L530.1 385.8 L531.0 388.0 L531.8 390.3 L532.4 392.6 L533.0 395.0 L533.5 397.4 L533.9 399.9 L534.3 402.4 L534.6 405.0 L534.9 407.7 L535.0 410.5 L535.1 413.3 L535.2 416.2 L535.3 419.1 L535.4 422.0 L535.5 425.0 L535.7 428.1 L535.8 431.2 L536.0 434.5 L536.2 437.7 L536.4 441.0 L536.6 444.1 L536.8 447.1 L537.0 450.0 L537.2 452.5 L537.4 454.7 L537.5 456.7 L537.7 458.6 L537.9 460.6 L538.1 462.9 L538.4 465.7 L538.7 469.0 L539.1 473.1 L539.5 477.9 L540.1 483.2 L540.6 488.8 L541.1 494.3 L541.6 499.7 L542.0 504.6 L542.4 508.8 L542.7 512.3 L542.9 515.4 L543.1 518.1 L543.2 520.5 L543.4 522.8 L543.4 525.1 L543.5 527.4 L543.5 530.0 L543.5 532.7 L543.4 535.4 L543.3 538.2 L543.1 541.0 L543.0 543.7 L542.8 546.5 L542.6 549.2 L542.5 552.0 L543.7 518.7 L543.5 523.7 L543.2 528.7 L543.0 533.7 L542.8 538.7 L542.6 543.6 L542.4 548.4 L542.3 553.3 L542.2 558.4 L542.2 563.4 L542.1 568.1 L541.9 572.3 L541.7 575.7 L541.4 578.3 L541.0 580.2 L540.6 581.5 L540.1 582.6 L539.5 583.5 L538.7 584.4 L538.7 585.3 L539.8 586.1 L540.7 586.7 L540.4 587.2 L537.6 587.6 L531.3 588.0 L519.7 588.4 L503.3 588.8 L484.5 589.1 L465.6 589.3 L449.0 589.4 L437.0 589.3 L430.1 589.0 L426.6 588.7 L425.3 588.1 L425.3 587.5 L425.4 586.6 L424.7 585.6 L423.4 584.6 L422.3 583.6 L421.4 582.4 L420.6 580.9 L419.9 578.7 L419.2 575.7 L418.5 571.7 L418.0 566.7 L417.5 561.1 L417.0 555.2 L416.5 549.3 L416.0 543.5 L415.5 537.6 L414.9 531.3 L414.3 524.9 L413.8 518.8 L413.3 513.3 L412.8 508.8 L412.4 505.4 L412.1 503.0 L411.8 501.2 L411.5 499.7 L411.3 498.2 L411.0 496.4 L410.5 496.0 L410.5 496.0 L410.5 496.0 L406.4 486.9 L406.2 483.6 L406.0 480.4 L405.8 477.2 L405.5 474.1 L405.2 471.0 L404.9 467.9 L404.6 464.9 L404.2 461.8 L403.9 458.8 L403.5 455.7 L403.1 452.6 L402.8 449.4 L402.4 446.2 L402.0 443.1 L401.6 439.9 L401.1 436.8 L400.5 433.9 L399.8 431.0 L399.0 428.3 L398.2 425.6 L397.2 423.0 L396.2 420.5 L395.1 418.1 L393.9 415.7 L392.5 413.3 L391.0 411.0 L389.3 408.7 L387.5 406.5 L385.6 404.4 L383.6 402.3 L381.4 400.2 L379.0 398.1 L376.5 396.0 L373.8 393.7 L370.9 391.4 L367.9 389.1 L364.8 386.7 L361.4 384.3 L357.9 381.9 L354.3 379.4 L350.5 376.7 L346.5 374.0 L342.2 371.1 L337.7 368.1 L332.8 365.0 L327.9 361.8 L322.9 358.6 L318.0 355.4 L313.4 352.2 L309.0 349.0 L304.8 345.9 L300.8 342.7 L296.8 339.5 L293.0 336.3 L289.3 333.2 L285.8 330.0 L282.6 327.0 L279.6 324.0 L276.9 321.1 L274.4 318.4 L272.2 315.7 L270.1 313.0 L268.2 310.3 L266.5 307.6 L265.0 304.9 L263.5 302.0 L262.2 299.0 L261.1 295.9 L260.2 292.7 L259.4 289.4 L258.8 286.2 L258.2 283.0 L257.6 280.0 L257.0 277.0 L256.4 274.2 L256.0 271.5 L255.6 268.8 L255.2 266.2 L254.9 263.7 L254.5 261.2 L254.2 258.6 L253.8 256.0 L256.0 256.0Z" fill="#5c0000"/>
<path d="M268.3 354.3 L268.6 355.5 L268.8 356.8 L269.1 358.0 L269.3 359.2 L269.6 360.4 L269.9 361.7 L270.3 363.0 L270.8 364.4 L271.4 365.9 L272.0 367.4 L272.8 369.0 L273.6 370.6 L274.4 372.3 L275.3 373.9 L276.2 375.6 L277.2 377.3 L278.2 379.0 L279.2 380.6 L280.3 382.3 L281.4 384.0 L282.6 385.8 L283.9 387.5 L285.4 389.4 L286.9 391.3 L288.6 393.3 L290.4 395.4 L292.3 397.6 L294.3 399.8 L296.3 402.1 L298.5 404.3 L300.8 406.5 L303.1 408.6 L305.5 410.7 L308.0 412.7 L310.7 414.7 L313.4 416.7 L316.1 418.6 L318.9 420.6 L321.8 422.6 L324.7 424.7 L327.6 426.8 L330.7 428.9 L333.8 431.0 L336.9 433.2 L340.1 435.3 L343.2 437.5 L346.4 439.7 L349.5 441.8 L352.5 437.4 L349.4 435.3 L346.2 433.1 L343.0 431.0 L339.9 428.8 L336.8 426.7 L333.7 424.6 L330.7 422.5 L327.8 420.4 L324.9 418.3 L322.0 416.3 L319.2 414.3 L316.5 412.4 L313.8 410.5 L311.3 408.5 L308.9 406.6 L306.6 404.6 L304.4 402.6 L302.2 400.5 L300.2 398.4 L298.1 396.3 L296.2 394.1 L294.4 392.0 L292.6 389.9 L291.0 388.0 L289.5 386.1 L288.2 384.4 L286.9 382.7 L285.8 381.1 L284.7 379.4 L283.7 377.8 L282.7 376.2 L281.7 374.6 L280.8 373.0 L279.9 371.4 L279.1 369.8 L278.3 368.3 L277.6 366.7 L276.9 365.3 L276.3 363.8 L275.7 362.5 L275.3 361.3 L275.0 360.3 L274.7 359.2 L274.5 358.1 L274.2 357.0 L274.0 355.7 L273.7 354.4 L273.4 353.1Z" fill="#6e0000"/>
<path d="M271.5 353.6 L271.8 354.8 L272.1 356.1 L272.3 357.3 L272.5 358.5 L272.8 359.6 L273.1 360.8 L273.4 362.0 L273.9 363.2 L274.4 364.6 L275.1 366.1 L275.8 367.6 L276.5 369.1 L277.3 370.7 L278.2 372.4 L279.1 374.0 L280.0 375.6 L281.0 377.3 L282.0 378.9 L283.1 380.5 L284.2 382.2 L285.3 383.8 L286.6 385.6 L287.9 387.3 L289.5 389.2 L291.1 391.2 L292.9 393.3 L294.7 395.4 L296.7 397.6 L298.7 399.8 L300.8 401.9 L303.0 404.1 L305.3 406.1 L307.6 408.1 L310.1 410.1 L312.6 412.0 L315.3 414.0 L318.0 416.0 L320.8 417.9 L323.7 420.0 L326.6 422.0 L329.5 424.1 L332.6 426.2 L335.6 428.3 L338.8 430.5 L341.9 432.6 L345.1 434.8 L348.2 436.9 L351.4 439.1 L354.4 434.7 L351.2 432.6 L348.1 430.4 L344.9 428.3 L341.7 426.1 L338.6 424.0 L335.6 421.9 L332.6 419.8 L329.7 417.7 L326.8 415.6 L323.9 413.6 L321.1 411.6 L318.4 409.7 L315.8 407.8 L313.3 405.9 L311.0 404.0 L308.8 402.2 L306.7 400.2 L304.6 398.2 L302.5 396.1 L300.6 394.0 L298.7 391.9 L296.9 389.8 L295.1 387.8 L293.5 385.9 L292.1 384.1 L290.8 382.4 L289.6 380.8 L288.5 379.2 L287.5 377.6 L286.5 376.1 L285.5 374.5 L284.6 372.9 L283.7 371.4 L282.8 369.8 L282.0 368.3 L281.2 366.8 L280.5 365.3 L279.9 363.9 L279.3 362.6 L278.8 361.4 L278.4 360.3 L278.2 359.4 L277.9 358.4 L277.7 357.4 L277.5 356.3 L277.2 355.1 L277.0 353.7 L276.7 352.4Z" fill="#a01400"/>
<path d="M274.7 352.8 L275.0 354.1 L275.3 355.5 L275.5 356.7 L275.8 357.8 L276.0 358.9 L276.3 359.9 L276.6 360.9 L277.0 362.1 L277.5 363.3 L278.1 364.7 L278.7 366.2 L279.5 367.7 L280.2 369.2 L281.1 370.8 L281.9 372.3 L282.9 373.9 L283.8 375.5 L284.8 377.1 L285.8 378.7 L286.9 380.3 L288.0 381.9 L289.2 383.6 L290.5 385.3 L292.0 387.1 L293.6 389.1 L295.4 391.1 L297.2 393.2 L299.1 395.4 L301.1 397.5 L303.2 399.6 L305.3 401.7 L307.5 403.7 L309.7 405.6 L312.1 407.5 L314.6 409.4 L317.2 411.3 L320.0 413.3 L322.8 415.2 L325.6 417.3 L328.5 419.3 L331.4 421.4 L334.4 423.5 L337.5 425.6 L340.6 427.7 L343.8 429.9 L346.9 432.1 L350.1 434.2 L353.2 436.4 L356.2 432.0 L353.1 429.9 L349.9 427.7 L346.8 425.5 L343.6 423.4 L340.5 421.3 L337.5 419.1 L334.5 417.1 L331.6 415.0 L328.7 412.9 L325.8 410.9 L323.0 409.0 L320.3 407.0 L317.8 405.2 L315.4 403.3 L313.1 401.5 L311.0 399.7 L308.9 397.8 L306.9 395.9 L304.9 393.9 L303.0 391.8 L301.2 389.7 L299.4 387.7 L297.7 385.7 L296.1 383.8 L294.7 382.0 L293.5 380.4 L292.3 378.9 L291.3 377.4 L290.3 375.8 L289.3 374.3 L288.4 372.8 L287.4 371.2 L286.5 369.7 L285.7 368.2 L284.9 366.8 L284.2 365.3 L283.5 363.9 L282.9 362.6 L282.4 361.3 L281.9 360.2 L281.6 359.3 L281.3 358.5 L281.1 357.7 L280.9 356.7 L280.7 355.7 L280.5 354.4 L280.2 353.0 L279.9 351.6Z" fill="#a03c00"/>
<path d="M277.9 352.1 L278.3 353.4 L278.5 354.8 L278.8 356.1 L279.0 357.1 L279.2 358.1 L279.4 359.0 L279.7 359.9 L280.1 360.9 L280.5 362.1 L281.1 363.4 L281.7 364.8 L282.4 366.2 L283.2 367.7 L284.0 369.2 L284.8 370.7 L285.7 372.2 L286.7 373.8 L287.6 375.4 L288.6 376.9 L289.6 378.5 L290.7 380.0 L291.9 381.6 L293.1 383.3 L294.6 385.0 L296.2 386.9 L297.9 389.0 L299.7 391.0 L301.6 393.1 L303.5 395.2 L305.5 397.3 L307.6 399.3 L309.7 401.2 L311.8 403.0 L314.1 404.9 L316.6 406.8 L319.2 408.6 L321.9 410.6 L324.7 412.5 L327.5 414.6 L330.4 416.6 L333.3 418.7 L336.3 420.8 L339.4 422.9 L342.5 425.0 L345.6 427.2 L348.8 429.3 L352.0 431.5 L355.1 433.6 L358.1 429.3 L355.0 427.1 L351.8 425.0 L348.6 422.8 L345.5 420.7 L342.4 418.5 L339.3 416.4 L336.4 414.4 L333.5 412.3 L330.6 410.3 L327.7 408.2 L324.9 406.3 L322.3 404.4 L319.8 402.5 L317.4 400.7 L315.2 399.0 L313.1 397.2 L311.2 395.4 L309.2 393.5 L307.3 391.6 L305.5 389.6 L303.6 387.5 L301.9 385.5 L300.2 383.5 L298.6 381.7 L297.3 380.0 L296.1 378.4 L295.0 377.0 L294.0 375.5 L293.0 374.1 L292.1 372.6 L291.2 371.1 L290.3 369.5 L289.4 368.1 L288.6 366.7 L287.9 365.3 L287.2 363.9 L286.5 362.5 L285.9 361.3 L285.4 360.0 L285.0 359.0 L284.7 358.2 L284.5 357.6 L284.3 356.9 L284.2 356.1 L284.0 355.0 L283.7 353.8 L283.4 352.3 L283.1 350.9Z" fill="#a05a00"/>
<path d="M281.2 351.3 L281.5 352.7 L281.8 354.2 L282.0 355.4 L282.2 356.5 L282.4 357.4 L282.6 358.1 L282.8 358.9 L283.1 359.7 L283.6 360.8 L284.1 362.1 L284.7 363.4 L285.4 364.8 L286.1 366.2 L286.9 367.6 L287.7 369.1 L288.5 370.6 L289.5 372.1 L290.4 373.6 L291.4 375.1 L292.4 376.6 L293.4 378.1 L294.5 379.6 L295.7 381.2 L297.1 382.9 L298.7 384.8 L300.4 386.8 L302.1 388.9 L304.0 390.9 L305.9 392.9 L307.8 394.9 L309.8 396.9 L311.8 398.7 L313.9 400.5 L316.2 402.3 L318.6 404.1 L321.1 406.0 L323.8 407.9 L326.6 409.8 L329.4 411.9 L332.3 413.9 L335.2 416.0 L338.2 418.1 L341.2 420.2 L344.4 422.3 L347.5 424.4 L350.7 426.6 L353.8 428.8 L357.0 430.9 L360.0 426.6 L356.8 424.4 L353.6 422.2 L350.5 420.1 L347.3 417.9 L344.2 415.8 L341.2 413.7 L338.3 411.7 L335.4 409.6 L332.5 407.6 L329.6 405.5 L326.8 403.6 L324.2 401.7 L321.7 399.9 L319.4 398.1 L317.3 396.4 L315.3 394.7 L313.4 393.0 L311.6 391.2 L309.7 389.3 L307.9 387.3 L306.1 385.4 L304.4 383.4 L302.7 381.4 L301.2 379.6 L299.9 378.0 L298.7 376.5 L297.7 375.0 L296.7 373.6 L295.8 372.3 L294.9 370.8 L294.0 369.4 L293.1 367.9 L292.3 366.5 L291.5 365.1 L290.8 363.7 L290.1 362.4 L289.5 361.1 L288.9 359.9 L288.5 358.8 L288.1 357.8 L287.8 357.2 L287.7 356.7 L287.6 356.1 L287.4 355.4 L287.2 354.4 L287.0 353.2 L286.6 351.6 L286.3 350.2Z" fill="#a07800"/>
<path d="M284.4 350.6 L284.7 352.0 L285.0 353.5 L285.3 354.8 L285.5 355.8 L285.6 356.6 L285.8 357.2 L286.0 357.8 L286.2 358.5 L286.6 359.5 L287.1 360.7 L287.7 362.0 L288.3 363.3 L289.0 364.7 L289.8 366.0 L290.5 367.4 L291.4 368.9 L292.3 370.4 L293.2 371.9 L294.1 373.3 L295.1 374.8 L296.1 376.2 L297.2 377.7 L298.3 379.2 L299.7 380.8 L301.2 382.7 L302.9 384.7 L304.6 386.7 L306.4 388.7 L308.3 390.7 L310.2 392.6 L312.1 394.5 L314.0 396.2 L316.0 397.9 L318.2 399.7 L320.5 401.5 L323.0 403.3 L325.7 405.2 L328.5 407.1 L331.3 409.2 L334.2 411.2 L337.1 413.3 L340.1 415.4 L343.1 417.4 L346.2 419.6 L349.4 421.7 L352.5 423.9 L355.7 426.0 L358.8 428.2 L361.8 423.8 L358.7 421.7 L355.5 419.5 L352.3 417.4 L349.2 415.2 L346.1 413.1 L343.1 411.0 L340.2 409.0 L337.3 406.9 L334.4 404.9 L331.5 402.8 L328.7 400.9 L326.1 399.0 L323.7 397.2 L321.5 395.5 L319.4 393.9 L317.5 392.3 L315.7 390.6 L313.9 388.9 L312.1 387.0 L310.3 385.1 L308.6 383.2 L306.9 381.2 L305.2 379.3 L303.7 377.5 L302.5 375.9 L301.4 374.5 L300.4 373.1 L299.5 371.8 L298.6 370.5 L297.7 369.1 L296.8 367.6 L295.9 366.2 L295.1 364.8 L294.4 363.5 L293.7 362.2 L293.1 361.0 L292.5 359.7 L292.0 358.6 L291.5 357.5 L291.2 356.7 L291.0 356.2 L290.9 355.8 L290.8 355.4 L290.6 354.7 L290.4 353.8 L290.2 352.5 L289.9 350.9 L289.5 349.4Z" fill="#8c8c00"/>
<path d="M287.6 349.9 L287.9 351.3 L288.3 352.9 L288.5 354.2 L288.7 355.1 L288.8 355.8 L289.0 356.4 L289.1 356.8 L289.3 357.4 L289.7 358.3 L290.2 359.4 L290.7 360.6 L291.3 361.8 L292.0 363.1 L292.7 364.5 L293.4 365.8 L294.2 367.2 L295.1 368.7 L296.0 370.1 L296.9 371.5 L297.8 372.9 L298.8 374.3 L299.8 375.7 L300.9 377.1 L302.2 378.7 L303.7 380.6 L305.4 382.5 L307.1 384.5 L308.9 386.4 L310.7 388.4 L312.5 390.3 L314.4 392.1 L316.2 393.8 L318.1 395.4 L320.2 397.1 L322.5 398.8 L325.0 400.6 L327.6 402.5 L330.4 404.5 L333.2 406.5 L336.2 408.6 L339.0 410.6 L342.0 412.6 L345.0 414.7 L348.1 416.8 L351.2 419.0 L354.4 421.1 L357.6 423.3 L360.7 425.5 L363.7 421.1 L360.6 419.0 L357.4 416.8 L354.2 414.6 L351.1 412.5 L348.0 410.4 L345.0 408.3 L342.1 406.3 L339.2 404.2 L336.3 402.2 L333.4 400.1 L330.7 398.2 L328.1 396.4 L325.7 394.6 L323.5 392.9 L321.5 391.3 L319.7 389.8 L318.0 388.2 L316.2 386.5 L314.5 384.7 L312.8 382.9 L311.0 381.0 L309.4 379.1 L307.8 377.2 L306.3 375.4 L305.1 373.9 L304.0 372.5 L303.1 371.2 L302.2 369.9 L301.3 368.7 L300.5 367.3 L299.6 365.9 L298.8 364.5 L298.0 363.2 L297.3 361.9 L296.6 360.7 L296.0 359.5 L295.5 358.3 L295.0 357.2 L294.5 356.2 L294.2 355.5 L294.1 355.1 L294.1 354.9 L294.0 354.6 L293.9 354.0 L293.7 353.1 L293.4 351.9 L293.1 350.2 L292.7 348.7Z" fill="#5a8c00"/>
<path d="M290.8 349.1 L291.2 350.6 L291.5 352.3 L291.7 353.5 L291.9 354.4 L292.1 355.1 L292.2 355.5 L292.2 355.8 L292.4 356.2 L292.7 357.0 L293.2 358.0 L293.7 359.2 L294.3 360.4 L294.9 361.6 L295.6 362.9 L296.3 364.2 L297.1 365.5 L297.9 366.9 L298.8 368.4 L299.7 369.7 L300.6 371.1 L301.5 372.4 L302.4 373.7 L303.5 375.1 L304.8 376.6 L306.3 378.4 L307.9 380.4 L309.6 382.3 L311.3 384.2 L313.1 386.1 L314.8 387.9 L316.6 389.7 L318.4 391.3 L320.2 392.9 L322.3 394.5 L324.5 396.2 L326.9 398.0 L329.5 399.8 L332.3 401.8 L335.1 403.8 L338.1 405.9 L340.9 407.9 L343.9 409.9 L346.9 412.0 L349.9 414.1 L353.1 416.3 L356.2 418.4 L359.4 420.6 L362.6 422.8 L365.6 418.4 L362.4 416.2 L359.2 414.1 L356.1 411.9 L352.9 409.8 L349.9 407.7 L346.9 405.6 L344.0 403.6 L341.1 401.6 L338.2 399.5 L335.3 397.4 L332.6 395.5 L330.0 393.7 L327.7 392.0 L325.5 390.3 L323.6 388.8 L321.9 387.3 L320.2 385.8 L318.6 384.2 L316.9 382.5 L315.2 380.6 L313.5 378.8 L311.9 376.9 L310.3 375.0 L308.8 373.3 L307.6 371.8 L306.7 370.5 L305.8 369.3 L304.9 368.1 L304.1 366.9 L303.3 365.6 L302.4 364.2 L301.6 362.8 L300.9 361.5 L300.2 360.4 L299.6 359.2 L299.0 358.0 L298.5 356.9 L298.0 355.9 L297.6 355.0 L297.3 354.3 L297.2 354.1 L297.2 354.1 L297.2 353.8 L297.1 353.4 L296.9 352.5 L296.7 351.2 L296.3 349.5 L296.0 347.9Z" fill="#2d8c00"/>
<path d="M294.0 348.4 L294.4 349.9 L294.7 351.6 L295.0 352.9 L295.1 353.8 L295.3 354.3 L295.3 354.6 L295.4 354.7 L295.5 355.0 L295.8 355.7 L296.2 356.7 L296.7 357.8 L297.2 358.9 L297.8 360.1 L298.5 361.3 L299.1 362.5 L299.9 363.8 L300.7 365.2 L301.6 366.6 L302.4 367.9 L303.3 369.2 L304.2 370.5 L305.1 371.7 L306.1 373.1 L307.3 374.6 L308.8 376.3 L310.4 378.2 L312.0 380.1 L313.7 382.0 L315.4 383.8 L317.2 385.6 L318.9 387.3 L320.6 388.8 L322.3 390.3 L324.3 391.9 L326.5 393.5 L328.9 395.3 L331.4 397.1 L334.2 399.1 L337.1 401.1 L340.0 403.2 L342.8 405.2 L345.7 407.2 L348.7 409.3 L351.8 411.4 L354.9 413.5 L358.1 415.7 L361.3 417.9 L364.4 420.0 L367.4 415.7 L364.3 413.5 L361.1 411.3 L357.9 409.2 L354.8 407.0 L351.7 404.9 L348.7 402.9 L345.9 400.9 L343.0 398.9 L340.1 396.8 L337.2 394.7 L334.5 392.8 L332.0 391.0 L329.6 389.3 L327.5 387.7 L325.7 386.2 L324.1 384.8 L322.5 383.4 L320.9 381.9 L319.3 380.2 L317.6 378.4 L316.0 376.6 L314.4 374.8 L312.8 372.9 L311.4 371.2 L310.2 369.8 L309.3 368.6 L308.5 367.4 L307.7 366.2 L306.9 365.1 L306.1 363.8 L305.3 362.5 L304.4 361.1 L303.7 359.9 L303.1 358.8 L302.5 357.7 L302.0 356.6 L301.5 355.5 L301.0 354.6 L300.6 353.7 L300.4 353.1 L300.4 353.1 L300.4 353.2 L300.4 353.1 L300.3 352.7 L300.2 351.9 L299.9 350.6 L299.5 348.8 L299.2 347.2Z" fill="#009600"/>
<path d="M297.2 347.6 L297.6 349.2 L298.0 351.0 L298.2 352.3 L298.4 353.1 L298.5 353.5 L298.5 353.7 L298.5 353.7 L298.6 353.8 L298.8 354.5 L299.2 355.4 L299.7 356.4 L300.2 357.5 L300.7 358.6 L301.4 359.7 L302.0 360.9 L302.7 362.1 L303.6 363.5 L304.4 364.9 L305.2 366.1 L306.0 367.3 L306.8 368.5 L307.7 369.7 L308.7 371.0 L309.9 372.5 L311.3 374.2 L312.9 376.1 L314.5 377.9 L316.2 379.8 L317.8 381.5 L319.5 383.3 L321.1 384.9 L322.8 386.3 L324.4 387.8 L326.3 389.3 L328.5 390.9 L330.8 392.6 L333.3 394.4 L336.1 396.4 L339.0 398.4 L341.9 400.5 L344.7 402.5 L347.6 404.5 L350.6 406.6 L353.7 408.7 L356.8 410.8 L360.0 413.0 L363.2 415.2 L366.3 417.3 L369.3 413.0 L366.1 410.8 L362.9 408.6 L359.8 406.4 L356.6 404.3 L353.6 402.2 L350.6 400.2 L347.8 398.2 L344.9 396.2 L342.0 394.1 L339.1 392.0 L336.4 390.1 L333.9 388.3 L331.6 386.7 L329.6 385.1 L327.8 383.7 L326.2 382.4 L324.8 381.0 L323.2 379.5 L321.6 377.9 L320.1 376.2 L318.5 374.4 L316.9 372.6 L315.3 370.8 L313.9 369.1 L312.8 367.7 L311.9 366.6 L311.1 365.5 L310.4 364.4 L309.6 363.3 L308.9 362.1 L308.1 360.8 L307.3 359.4 L306.6 358.3 L306.0 357.2 L305.4 356.1 L304.9 355.1 L304.4 354.1 L304.0 353.2 L303.7 352.4 L303.5 352.0 L303.5 352.0 L303.6 352.3 L303.6 352.3 L303.5 352.0 L303.4 351.2 L303.1 350.0 L302.8 348.1 L302.4 346.5Z" fill="#009600"/>
<path d="M300.5 346.9 L300.8 348.5 L301.2 350.3 L301.5 351.6 L301.6 352.4 L301.7 352.8 L301.7 352.8 L301.6 352.7 L301.6 352.7 L301.9 353.2 L302.2 354.0 L302.7 355.0 L303.1 356.0 L303.7 357.1 L304.3 358.1 L304.9 359.3 L305.6 360.5 L306.4 361.8 L307.2 363.1 L308.0 364.3 L308.7 365.5 L309.5 366.6 L310.4 367.8 L311.3 369.0 L312.4 370.4 L313.8 372.1 L315.4 373.9 L317.0 375.7 L318.6 377.5 L320.2 379.3 L321.8 380.9 L323.4 382.5 L324.9 383.9 L326.5 385.2 L328.4 386.7 L330.4 388.3 L332.7 389.9 L335.2 391.7 L338.0 393.7 L340.9 395.7 L343.8 397.8 L346.6 399.8 L349.5 401.8 L352.5 403.9 L355.5 405.9 L358.7 408.1 L361.8 410.2 L365.0 412.4 L368.2 414.6 L371.2 410.2 L368.0 408.1 L364.8 405.9 L361.6 403.7 L358.5 401.6 L355.5 399.5 L352.5 397.5 L349.7 395.5 L346.9 393.5 L343.9 391.4 L341.0 389.3 L338.3 387.4 L335.8 385.7 L333.6 384.0 L331.6 382.5 L329.9 381.2 L328.4 379.9 L327.0 378.6 L325.6 377.2 L324.0 375.6 L322.5 374.0 L320.9 372.2 L319.4 370.5 L317.9 368.7 L316.5 367.0 L315.4 365.7 L314.6 364.6 L313.8 363.6 L313.1 362.5 L312.4 361.5 L311.7 360.3 L310.9 359.0 L310.1 357.8 L309.5 356.6 L308.9 355.6 L308.4 354.6 L307.9 353.7 L307.4 352.7 L307.1 351.9 L306.7 351.2 L306.6 350.8 L306.6 351.0 L306.8 351.4 L306.8 351.6 L306.8 351.3 L306.6 350.6 L306.4 349.3 L306.0 347.4 L305.6 345.7Z" fill="#009600"/>
<path d="M380.9 196.0 L381.0 194.1 L381.1 192.1 L381.1 190.1 L381.2 188.2 L381.3 186.5 L381.5 185.0 L381.7 183.9 L381.9 183.0 L382.1 182.3 L382.3 181.7 L382.6 181.1 L383.0 180.5 L383.4 179.8 L383.9 179.2 L384.5 178.6 L385.1 178.0 L385.8 177.5 L386.5 177.0 L387.3 176.6 L388.2 176.4 L389.1 176.2 L390.1 176.0 L391.1 175.8 L392.0 175.6 L448.1 175.4 L448.0 190.0 L447.8 194.8 L447.7 199.6 L447.5 204.6 L447.4 209.5 L447.2 214.3 L447.1 218.9 L446.9 223.3 L446.8 227.3 L446.7 231.0 L446.5 234.5 L446.3 237.8 L446.1 240.9 L446.0 243.9 L446.0 246.6 L446.0 249.2 L446.2 251.6 L446.5 253.8 L446.8 255.7 L447.3 257.4 L447.8 259.0 L448.4 260.4 L449.1 261.9 L449.9 263.4 L450.8 265.0 L451.8 266.7 L452.8 268.3 L453.8 269.9 L455.0 271.6 L456.3 273.2 L457.8 274.9 L459.6 276.7 L461.6 278.5 L463.9 280.4 L466.5 282.2 L469.2 284.1 L472.2 286.1 L475.3 288.1 L478.7 290.2 L482.2 292.4 L485.8 294.7 L489.6 297.1 L493.7 299.6 L498.0 302.3 L502.5 304.9 L507.1 307.7 L511.7 310.5 L516.3 313.3 L520.9 316.2 L525.6 319.1 L530.5 322.1 L535.4 325.2 L540.4 328.3 L545.3 331.5 L550.1 334.6 L554.5 337.6 L558.6 340.5 L562.3 343.3 L565.9 346.1 L569.1 348.9 L572.2 351.6 L575.1 354.3 L577.8 356.9 L580.4 359.5 L582.8 362.0 L585.1 364.5 L587.1 367.0 L589.0 369.4 L590.7 371.8 L592.3 374.1 L593.7 376.4 L595.1 378.7 L596.3 380.9 L597.4 383.1 L598.3 385.1 L599.1 387.2 L599.8 389.2 L600.4 391.2 L600.9 393.1 L601.4 395.1 L601.9 397.0 L602.4 398.8 L602.8 400.4 L603.2 401.9 L603.6 403.5 L603.9 405.2 L604.1 407.1 L604.3 409.3 L604.4 412.0 L604.4 415.2 L604.4 418.9 L604.2 423.0 L604.1 427.2 L603.8 431.6 L603.6 436.0 L603.3 440.3 L603.1 444.3 L602.8 448.1 L602.6 451.9 L602.2 455.6 L601.9 459.2 L601.6 462.9 L601.2 466.5 L601.0 470.2 L600.7 474.0 L600.5 477.8 L600.3 481.7 L600.1 485.5 L600.0 489.4 L599.8 493.3 L599.7 497.2 L599.6 501.1 L599.4 505.0 L553.6 505.0 L552.3 505.2 L550.9 505.4 L549.6 505.6 L548.5 506.0 L547.7 506.5 L547.1 507.1 L546.6 507.9 L546.1 508.8 L545.6 509.9 L545.2 511.3 L544.8 512.7 L544.5 514.0 L544.2 515.2 L544.1 516.4 L543.9 517.5 L543.7 518.7 L542.1 552.0 L542.1 549.2 L542.0 546.5 L542.0 543.7 L542.0 541.0 L542.0 538.2 L541.9 535.4 L541.8 532.7 L541.7 530.0 L541.6 527.4 L541.4 525.0 L541.3 522.7 L541.1 520.3 L540.9 517.8 L540.6 515.1 L540.3 512.2 L539.9 508.8 L539.5 504.8 L538.9 500.3 L538.2 495.4 L537.6 490.3 L536.9 485.3 L536.3 480.5 L535.7 476.2 L535.2 472.6 L534.9 469.8 L534.6 467.5 L534.3 465.7 L534.1 464.1 L534.0 462.7 L533.8 461.3 L533.6 459.8 L533.4 458.0 L533.2 456.0 L532.9 453.9 L532.7 451.7 L532.5 449.5 L532.3 447.3 L532.0 445.1 L531.7 442.8 L531.3 440.6 L530.9 438.4 L530.5 436.1 L530.1 433.8 L529.6 431.6 L529.1 429.3 L528.5 427.0 L527.8 424.8 L527.0 422.6 L526.1 420.5 L525.1 418.4 L524.1 416.3 L523.0 414.3 L521.8 412.2 L520.5 410.2 L519.0 408.2 L517.4 406.2 L515.7 404.2 L514.0 402.3 L512.2 400.5 L510.2 398.7 L508.1 396.8 L505.7 394.8 L503.0 392.7 L500.0 390.2 L496.5 387.6 L492.7 384.7 L488.5 381.7 L484.1 378.6 L479.5 375.4 L474.8 372.1 L470.2 368.8 L465.6 365.5 L461.0 362.1 L456.2 358.7 L451.2 355.2 L446.2 351.6 L441.3 348.1 L436.6 344.5 L432.2 341.1 L428.2 337.8 L424.5 334.6 L421.2 331.5 L418.0 328.5 L415.1 325.6 L412.4 322.6 L409.8 319.5 L407.4 316.4 L405.0 313.0 L402.8 309.4 L400.7 305.7 L398.8 302.0 L397.1 298.1 L395.4 294.1 L393.8 290.1 L392.4 285.9 L391.0 281.7 L389.7 277.2 L388.5 272.5 L387.4 267.6 L386.4 262.6 L385.5 257.7 L384.7 253.0 L384.0 248.5 L383.4 244.5 L382.9 240.9 L382.6 237.7 L382.4 234.8 L382.2 232.0 L382.1 229.3 L382.1 226.7 L382.0 223.8 L381.9 220.8 L381.8 217.6 L381.7 214.2 L381.6 210.9 L381.6 207.4 L381.5 204.0 L381.5 200.5 L381.4 197.0 L381.3 193.6Z" fill="#000058"/>
<path d="M381.6 192.0 L381.8 195.5 L382.0 199.2 L382.3 202.8 L382.5 206.5 L382.7 210.0 L382.9 213.5 L383.2 216.8 L383.5 220.0 L383.8 222.9 L384.0 225.4 L384.2 227.8 L384.5 230.1 L384.8 232.5 L385.2 235.0 L385.8 237.7 L386.5 240.8 L387.4 244.3 L388.4 248.2 L389.5 252.3 L390.8 256.5 L392.1 260.8 L393.6 265.0 L395.2 269.1 L397.0 273.0 L398.9 276.7 L400.9 280.2 L403.0 283.7 L405.2 287.2 L407.6 290.5 L410.1 293.8 L412.9 296.9 L415.8 300.0 L418.9 302.9 L422.3 305.7 L425.8 308.4 L429.4 311.0 L433.2 313.5 L437.2 316.1 L441.2 318.8 L445.4 321.6 L449.8 324.5 L454.4 327.6 L459.1 330.6 L464.0 333.8 L468.9 336.9 L473.8 340.0 L478.5 343.0 L483.0 345.9 L487.4 348.8 L491.9 351.6 L496.4 354.4 L500.8 357.2 L504.9 359.8 L508.8 362.5 L512.4 365.0 L515.5 367.4 L518.2 369.7 L520.4 371.8 L522.3 373.7 L523.9 375.7 L525.4 377.6 L526.6 379.5 L527.8 381.5 L529.0 383.6 L530.1 385.8 L531.0 388.0 L531.8 390.3 L532.4 392.6 L533.0 395.0 L533.5 397.4 L533.9 399.9 L534.3 402.4 L534.6 405.0 L534.9 407.7 L535.0 410.5 L535.1 413.3 L535.2 416.2 L535.3 419.1 L535.4 422.0 L535.5 425.0 L535.7 428.1 L535.8 431.2 L536.0 434.5 L536.2 437.7 L536.4 441.0 L536.6 444.1 L536.8 447.1 L537.0 450.0 L537.2 452.5 L537.4 454.7 L537.5 456.7 L537.7 458.6 L537.9 460.6 L538.1 462.9 L538.4 465.7 L538.7 469.0 L539.1 473.1 L539.5 477.9 L540.1 483.2 L540.6 488.8 L541.1 494.3 L541.6 499.7 L542.0 504.6 L542.4 508.8 L542.7 512.3 L542.9 515.4 L543.1 518.1 L543.2 520.5 L543.4 522.8 L543.4 525.1 L543.5 527.4 L543.5 530.0 L543.5 532.7 L543.4 535.4 L543.3 538.2 L543.1 541.0 L543.0 543.7 L542.8 546.5 L542.6 549.2 L542.5 552.0 L542.4 552.0 L542.5 549.2 L542.6 546.5 L542.7 543.7 L542.8 541.0 L542.9 538.2 L543.0 535.4 L543.0 532.7 L543.0 530.0 L543.0 527.4 L542.9 525.1 L542.8 522.8 L542.7 520.5 L542.5 518.0 L542.3 515.3 L542.0 512.3 L541.7 508.8 L541.4 504.6 L540.9 499.8 L540.3 494.6 L539.8 489.2 L539.2 483.8 L538.7 478.6 L538.2 473.9 L537.8 470.0 L537.4 466.8 L537.2 464.2 L537.0 462.0 L536.8 460.1 L536.6 458.3 L536.4 456.5 L536.2 454.5 L536.0 452.1 L535.8 449.5 L535.6 446.7 L535.4 443.8 L535.2 440.9 L535.0 437.9 L534.8 434.9 L534.6 432.0 L534.4 429.2 L534.2 426.4 L534.0 423.7 L533.8 420.9 L533.7 418.2 L533.4 415.5 L533.2 412.9 L532.8 410.3 L532.3 407.8 L531.8 405.4 L531.2 403.0 L530.6 400.7 L529.9 398.4 L529.1 396.2 L528.2 394.0 L527.1 391.8 L525.9 389.6 L524.6 387.6 L523.3 385.6 L521.8 383.7 L520.3 381.8 L518.5 379.9 L516.5 377.9 L514.1 375.8 L511.3 373.5 L508.1 371.0 L504.5 368.4 L500.5 365.7 L496.3 362.9 L491.9 360.0 L487.4 357.1 L482.8 354.1 L478.4 351.1 L473.8 348.1 L469.1 345.0 L464.2 341.8 L459.2 338.5 L454.4 335.3 L449.6 332.1 L445.0 329.0 L440.8 325.9 L436.8 323.0 L432.9 320.3 L429.2 317.6 L425.6 314.9 L422.2 312.2 L418.9 309.4 L415.8 306.5 L412.9 303.5 L410.2 300.3 L407.6 297.0 L405.2 293.6 L403.0 290.2 L400.9 286.6 L398.9 283.0 L397.1 279.3 L395.3 275.4 L393.6 271.5 L392.1 267.3 L390.7 262.9 L389.4 258.4 L388.2 254.0 L387.2 249.8 L386.2 245.8 L385.4 242.1 L384.7 238.9 L384.2 236.0 L383.8 233.4 L383.5 230.9 L383.3 228.5 L383.1 226.0 L382.9 223.4 L382.7 220.4 L382.4 217.2 L382.2 213.9 L382.1 210.5 L381.9 207.1 L381.8 203.6 L381.6 200.1 L381.5 196.6 L381.4 193.2Z" fill="#000096"/>
<path d="M381.5 192.8 L381.6 196.3 L381.8 199.8 L381.9 203.3 L382.1 206.9 L382.3 210.4 L382.5 213.8 L382.7 217.1 L382.9 220.3 L383.2 223.2 L383.4 225.8 L383.6 228.3 L383.8 230.7 L384.1 233.1 L384.5 235.7 L385.0 238.5 L385.8 241.7 L386.6 245.3 L387.6 249.2 L388.7 253.4 L389.8 257.8 L391.2 262.2 L392.6 266.5 L394.2 270.7 L395.9 274.6 L397.7 278.4 L399.6 282.1 L401.6 285.7 L403.7 289.2 L406.0 292.6 L408.4 295.9 L411.1 299.2 L413.9 302.3 L416.9 305.3 L420.0 308.2 L423.4 310.9 L426.9 313.6 L430.5 316.2 L434.3 318.9 L438.3 321.6 L442.3 324.5 L446.6 327.5 L451.2 330.6 L456.0 333.7 L460.8 336.9 L465.8 340.1 L470.6 343.3 L475.4 346.4 L479.9 349.4 L484.4 352.3 L488.9 355.3 L493.4 358.1 L497.8 361.0 L502.0 363.8 L505.9 366.4 L509.5 369.0 L512.7 371.5 L515.5 373.8 L517.8 375.9 L519.8 377.9 L521.5 379.8 L523.0 381.7 L524.4 383.6 L525.7 385.5 L526.9 387.6 L528.1 389.8 L529.1 392.0 L530.0 394.2 L530.7 396.5 L531.4 398.8 L532.0 401.1 L532.5 403.5 L533.0 406.0 L533.4 408.6 L533.7 411.2 L534.0 413.8 L534.1 416.6 L534.3 419.3 L534.4 422.1 L534.6 425.0 L534.8 427.8 L535.0 430.7 L535.2 433.7 L535.4 436.8 L535.6 439.8 L535.8 442.9 L536.0 445.9 L536.2 448.7 L536.4 451.4 L536.6 453.8 L536.7 455.9 L536.9 457.7 L537.1 459.6 L537.3 461.5 L537.5 463.7 L537.8 466.4 L538.1 469.6 L538.5 473.7 L539.0 478.4 L539.5 483.6 L540.0 489.0 L540.6 494.5 L541.1 499.8 L541.6 504.6 L542.0 508.8 L542.3 512.3 L542.5 515.3 L542.7 518.0 L542.9 520.5 L543.0 522.8 L543.1 525.1 L543.1 527.4 L543.2 530.0 L543.2 532.7 L543.1 535.4 L543.0 538.2 L542.9 541.0 L542.8 543.7 L542.7 546.5 L542.5 549.2 L542.4 552.0 L542.3 552.0 L542.4 549.2 L542.5 546.5 L542.5 543.7 L542.6 541.0 L542.7 538.2 L542.7 535.4 L542.7 532.7 L542.7 530.0 L542.6 527.4 L542.5 525.0 L542.4 522.7 L542.3 520.4 L542.1 518.0 L541.9 515.3 L541.6 512.3 L541.3 508.8 L540.9 504.7 L540.4 500.0 L539.8 494.8 L539.2 489.4 L538.6 484.1 L538.1 479.1 L537.6 474.5 L537.1 470.6 L536.8 467.5 L536.5 465.0 L536.3 462.9 L536.1 461.1 L535.9 459.4 L535.8 457.7 L535.6 455.8 L535.4 453.6 L535.2 451.1 L535.0 448.5 L534.8 445.8 L534.6 443.0 L534.3 440.2 L534.1 437.4 L533.9 434.6 L533.6 432.0 L533.4 429.3 L533.1 426.7 L532.9 424.1 L532.7 421.5 L532.4 418.9 L532.0 416.3 L531.6 413.9 L531.0 411.4 L530.4 409.1 L529.7 406.8 L529.0 404.5 L528.2 402.3 L527.3 400.1 L526.3 397.9 L525.1 395.8 L523.8 393.7 L522.4 391.6 L521.0 389.7 L519.5 387.8 L517.8 386.0 L516.0 384.1 L513.8 382.1 L511.4 379.9 L508.6 377.6 L505.3 375.1 L501.6 372.4 L497.6 369.6 L493.3 366.7 L488.8 363.8 L484.3 360.7 L479.7 357.7 L475.2 354.6 L470.7 351.5 L465.9 348.3 L461.0 345.0 L456.1 341.7 L451.2 338.4 L446.4 335.1 L441.9 331.9 L437.7 328.8 L433.8 325.8 L430.0 323.0 L426.5 320.2 L423.0 317.5 L419.8 314.7 L416.7 311.9 L413.8 308.9 L411.0 305.8 L408.4 302.5 L405.9 299.2 L403.6 295.7 L401.5 292.2 L399.5 288.5 L397.6 284.8 L395.8 281.0 L394.2 277.1 L392.6 273.0 L391.1 268.7 L389.7 264.3 L388.5 259.7 L387.3 255.2 L386.3 250.8 L385.4 246.7 L384.6 243.0 L384.0 239.7 L383.5 236.7 L383.1 234.0 L382.9 231.5 L382.7 229.0 L382.5 226.4 L382.3 223.7 L382.1 220.7 L381.9 217.5 L381.8 214.2 L381.6 210.9 L381.5 207.5 L381.4 204.1 L381.4 200.7 L381.3 197.3 L381.2 194.0Z" fill="#001ea0"/>
<path d="M381.3 193.6 L381.4 197.0 L381.5 200.4 L381.6 203.8 L381.7 207.3 L381.9 210.7 L382.0 214.1 L382.2 217.4 L382.4 220.6 L382.6 223.5 L382.8 226.2 L383.0 228.7 L383.2 231.2 L383.5 233.7 L383.8 236.4 L384.3 239.3 L385.0 242.6 L385.8 246.3 L386.7 250.3 L387.8 254.6 L388.9 259.1 L390.2 263.6 L391.6 268.0 L393.1 272.3 L394.7 276.3 L396.5 280.1 L398.3 283.9 L400.2 287.6 L402.2 291.2 L404.4 294.7 L406.7 298.1 L409.3 301.4 L412.0 304.6 L414.8 307.7 L417.8 310.7 L421.0 313.5 L424.3 316.2 L427.8 318.9 L431.5 321.6 L435.3 324.4 L439.2 327.4 L443.5 330.4 L448.0 333.6 L452.8 336.9 L457.7 340.1 L462.6 343.4 L467.5 346.6 L472.2 349.8 L476.8 352.9 L481.3 355.9 L485.8 358.9 L490.4 361.9 L494.8 364.8 L499.1 367.7 L503.1 370.4 L506.7 373.1 L510.0 375.6 L512.7 377.9 L515.2 380.0 L517.2 382.0 L519.1 383.9 L520.7 385.8 L522.1 387.7 L523.5 389.6 L524.9 391.7 L526.1 393.8 L527.2 395.9 L528.2 398.1 L529.1 400.3 L529.8 402.6 L530.5 404.9 L531.1 407.2 L531.7 409.6 L532.2 412.1 L532.6 414.6 L532.9 417.2 L533.2 419.8 L533.4 422.5 L533.6 425.2 L533.8 427.9 L534.0 430.6 L534.2 433.3 L534.5 436.2 L534.7 439.0 L534.9 441.9 L535.1 444.8 L535.3 447.6 L535.5 450.3 L535.7 452.9 L535.9 455.1 L536.1 457.1 L536.3 458.8 L536.4 460.6 L536.6 462.4 L536.9 464.6 L537.1 467.1 L537.5 470.3 L537.9 474.2 L538.4 478.8 L538.9 483.9 L539.5 489.3 L540.1 494.7 L540.6 499.9 L541.1 504.7 L541.5 508.8 L541.8 512.3 L542.1 515.3 L542.3 518.0 L542.5 520.4 L542.6 522.8 L542.7 525.0 L542.8 527.4 L542.9 530.0 L542.9 532.7 L542.9 535.4 L542.8 538.2 L542.7 541.0 L542.6 543.7 L542.5 546.5 L542.4 549.2 L542.4 552.0 L542.2 552.0 L542.3 549.2 L542.3 546.5 L542.4 543.7 L542.4 541.0 L542.4 538.2 L542.5 535.4 L542.4 532.7 L542.4 530.0 L542.3 527.4 L542.2 525.0 L542.0 522.7 L541.9 520.4 L541.7 517.9 L541.5 515.2 L541.2 512.2 L540.8 508.8 L540.4 504.7 L539.9 500.1 L539.3 495.0 L538.7 489.7 L538.1 484.5 L537.5 479.5 L537.0 475.0 L536.5 471.2 L536.2 468.2 L535.9 465.8 L535.7 463.8 L535.5 462.0 L535.3 460.5 L535.1 458.8 L535.0 457.1 L534.8 455.0 L534.5 452.7 L534.3 450.2 L534.1 447.7 L533.9 445.1 L533.7 442.5 L533.4 439.9 L533.2 437.3 L532.9 434.8 L532.6 432.2 L532.3 429.7 L532.0 427.2 L531.7 424.7 L531.3 422.2 L530.9 419.8 L530.4 417.4 L529.7 415.0 L529.0 412.8 L528.3 410.5 L527.4 408.3 L526.5 406.1 L525.5 404.0 L524.4 401.9 L523.2 399.8 L521.8 397.7 L520.3 395.7 L518.7 393.8 L517.1 391.9 L515.4 390.1 L513.4 388.2 L511.2 386.2 L508.7 384.0 L505.8 381.7 L502.5 379.1 L498.7 376.4 L494.6 373.5 L490.3 370.5 L485.8 367.5 L481.2 364.4 L476.7 361.3 L472.1 358.1 L467.6 354.9 L462.8 351.7 L457.8 348.3 L452.9 344.9 L448.0 341.5 L443.3 338.2 L438.8 334.9 L434.6 331.7 L430.8 328.7 L427.2 325.7 L423.7 322.9 L420.5 320.1 L417.4 317.3 L414.5 314.4 L411.7 311.3 L409.1 308.1 L406.5 304.8 L404.2 301.3 L402.0 297.8 L400.0 294.2 L398.1 290.4 L396.3 286.6 L394.6 282.7 L393.1 278.7 L391.5 274.6 L390.1 270.2 L388.8 265.6 L387.6 261.0 L386.5 256.4 L385.5 251.9 L384.7 247.7 L383.9 243.9 L383.3 240.5 L382.8 237.4 L382.5 234.7 L382.2 232.0 L382.0 229.4 L381.9 226.8 L381.7 224.0 L381.6 221.0 L381.4 217.8 L381.3 214.5 L381.2 211.2 L381.2 207.9 L381.1 204.6 L381.1 201.3 L381.1 198.0 L381.1 194.9Z" fill="#0046a0"/>
<path d="M381.2 194.4 L381.2 197.7 L381.2 201.0 L381.3 204.3 L381.3 207.7 L381.4 211.0 L381.5 214.4 L381.7 217.7 L381.8 220.9 L382.0 223.8 L382.2 226.6 L382.4 229.2 L382.5 231.7 L382.8 234.3 L383.1 237.1 L383.6 240.1 L384.3 243.4 L385.0 247.2 L385.9 251.4 L386.9 255.8 L388.0 260.4 L389.2 264.9 L390.6 269.5 L392.0 273.8 L393.6 277.9 L395.2 281.8 L397.0 285.7 L398.8 289.5 L400.7 293.2 L402.8 296.8 L405.0 300.3 L407.4 303.6 L410.0 306.9 L412.8 310.1 L415.6 313.1 L418.6 316.0 L421.8 318.8 L425.1 321.6 L428.6 324.4 L432.3 327.2 L436.2 330.3 L440.3 333.4 L444.8 336.7 L449.6 340.0 L454.5 343.3 L459.4 346.7 L464.3 350.0 L469.1 353.2 L473.7 356.4 L478.2 359.5 L482.8 362.6 L487.3 365.6 L491.8 368.6 L496.1 371.6 L500.2 374.4 L503.9 377.1 L507.2 379.6 L510.0 382.0 L512.5 384.1 L514.7 386.1 L516.6 388.0 L518.3 389.9 L519.9 391.7 L521.3 393.7 L522.8 395.7 L524.2 397.8 L525.4 399.9 L526.4 402.0 L527.4 404.2 L528.2 406.4 L529.0 408.6 L529.7 410.9 L530.4 413.2 L531.0 415.6 L531.5 418.1 L531.8 420.6 L532.2 423.1 L532.5 425.6 L532.7 428.2 L533.0 430.8 L533.2 433.4 L533.5 436.0 L533.8 438.6 L534.0 441.3 L534.2 444.0 L534.4 446.7 L534.6 449.3 L534.9 451.9 L535.1 454.3 L535.3 456.4 L535.5 458.3 L535.6 459.9 L535.8 461.5 L536.0 463.3 L536.2 465.4 L536.5 467.9 L536.8 470.9 L537.3 474.8 L537.8 479.3 L538.4 484.3 L539.0 489.6 L539.6 494.9 L540.1 500.0 L540.7 504.7 L541.1 508.8 L541.4 512.2 L541.7 515.3 L541.9 517.9 L542.1 520.4 L542.2 522.7 L542.4 525.0 L542.5 527.4 L542.5 530.0 L542.6 532.7 L542.6 535.4 L542.6 538.2 L542.5 541.0 L542.5 543.7 L542.4 546.5 L542.3 549.2 L542.3 552.0 L542.2 552.0 L542.2 549.2 L542.2 546.5 L542.2 543.7 L542.2 541.0 L542.2 538.2 L542.2 535.4 L542.1 532.7 L542.1 530.0 L541.9 527.4 L541.8 525.0 L541.7 522.7 L541.5 520.3 L541.3 517.9 L541.1 515.2 L540.8 512.2 L540.4 508.8 L540.0 504.8 L539.4 500.2 L538.8 495.2 L538.2 490.0 L537.5 484.9 L536.9 480.0 L536.4 475.6 L535.9 471.9 L535.6 469.0 L535.3 466.6 L535.0 464.7 L534.8 463.0 L534.7 461.5 L534.5 460.0 L534.3 458.4 L534.1 456.4 L533.9 454.2 L533.7 451.9 L533.5 449.6 L533.2 447.2 L533.0 444.8 L532.7 442.3 L532.5 439.9 L532.1 437.5 L531.8 435.2 L531.4 432.8 L531.1 430.4 L530.7 428.0 L530.3 425.6 L529.7 423.2 L529.1 420.9 L528.4 418.7 L527.6 416.4 L526.8 414.3 L525.9 412.1 L524.9 410.0 L523.8 407.9 L522.5 405.8 L521.2 403.8 L519.7 401.7 L518.1 399.7 L516.5 397.9 L514.8 396.0 L512.9 394.2 L510.9 392.3 L508.6 390.3 L506.0 388.1 L503.0 385.8 L499.6 383.1 L495.8 380.4 L491.7 377.4 L487.3 374.4 L482.8 371.2 L478.2 368.0 L473.6 364.8 L469.1 361.6 L464.4 358.4 L459.6 355.0 L454.7 351.6 L449.7 348.1 L444.8 344.6 L440.1 341.2 L435.6 337.8 L431.5 334.6 L427.8 331.5 L424.3 328.5 L421.0 325.6 L417.9 322.7 L415.0 319.8 L412.3 316.8 L409.7 313.7 L407.2 310.4 L404.7 307.0 L402.5 303.5 L400.4 299.9 L398.5 296.2 L396.7 292.4 L395.0 288.4 L393.4 284.4 L391.9 280.3 L390.4 276.2 L389.0 271.7 L387.8 267.0 L386.6 262.3 L385.6 257.6 L384.7 253.0 L383.9 248.7 L383.2 244.7 L382.6 241.3 L382.1 238.2 L381.8 235.3 L381.6 232.6 L381.4 229.9 L381.3 227.2 L381.2 224.3 L381.0 221.3 L380.9 218.1 L380.8 214.8 L380.8 211.5 L380.8 208.3 L380.8 205.1 L380.8 201.9 L380.9 198.8 L381.0 195.7Z" fill="#006996"/>
<path d="M381.0 195.3 L381.0 198.4 L381.0 201.6 L380.9 204.8 L381.0 208.1 L381.0 211.4 L381.1 214.7 L381.2 217.9 L381.3 221.1 L381.4 224.2 L381.6 227.0 L381.7 229.7 L381.9 232.3 L382.1 235.0 L382.5 237.8 L382.9 240.9 L383.5 244.3 L384.3 248.2 L385.1 252.5 L386.0 257.0 L387.1 261.6 L388.3 266.3 L389.6 270.9 L391.0 275.4 L392.5 279.5 L394.0 283.6 L395.7 287.5 L397.4 291.4 L399.2 295.2 L401.2 298.8 L403.3 302.4 L405.6 305.9 L408.1 309.3 L410.7 312.5 L413.4 315.6 L416.2 318.5 L419.2 321.4 L422.4 324.2 L425.7 327.1 L429.3 330.1 L433.1 333.1 L437.2 336.4 L441.7 339.7 L446.4 343.1 L451.3 346.5 L456.3 349.9 L461.2 353.3 L466.0 356.6 L470.6 359.9 L475.1 363.0 L479.7 366.2 L484.3 369.4 L488.8 372.5 L493.2 375.5 L497.3 378.4 L501.1 381.1 L504.4 383.7 L507.3 386.1 L509.9 388.2 L512.2 390.2 L514.2 392.1 L516.0 394.0 L517.6 395.8 L519.2 397.7 L520.7 399.7 L522.2 401.8 L523.5 403.9 L524.6 406.0 L525.7 408.1 L526.6 410.2 L527.5 412.4 L528.3 414.6 L529.1 416.9 L529.7 419.2 L530.3 421.5 L530.8 423.9 L531.2 426.3 L531.5 428.8 L531.9 431.3 L532.2 433.7 L532.5 436.1 L532.8 438.6 L533.1 441.1 L533.3 443.6 L533.6 446.1 L533.8 448.6 L534.0 451.1 L534.2 453.4 L534.4 455.7 L534.6 457.7 L534.8 459.4 L535.0 461.0 L535.2 462.5 L535.4 464.2 L535.6 466.2 L535.9 468.6 L536.2 471.6 L536.7 475.3 L537.2 479.8 L537.8 484.7 L538.4 489.9 L539.1 495.1 L539.7 500.1 L540.2 504.8 L540.6 508.8 L541.0 512.2 L541.3 515.2 L541.5 517.9 L541.7 520.4 L541.9 522.7 L542.0 525.0 L542.1 527.4 L542.2 530.0 L542.3 532.7 L542.3 535.4 L542.3 538.2 L542.3 541.0 L542.3 543.7 L542.3 546.5 L542.2 549.2 L542.2 552.0 L542.1 552.0 L542.1 549.2 L542.0 546.5 L542.0 543.7 L542.0 541.0 L542.0 538.2 L541.9 535.4 L541.8 532.7 L541.7 530.0 L541.6 527.4 L541.5 525.0 L541.3 522.7 L541.1 520.3 L540.9 517.8 L540.6 515.1 L540.3 512.2 L540.0 508.8 L539.5 504.8 L538.9 500.3 L538.3 495.4 L537.6 490.3 L537.0 485.2 L536.3 480.4 L535.8 476.1 L535.3 472.5 L534.9 469.7 L534.6 467.4 L534.4 465.6 L534.2 464.0 L534.0 462.6 L533.9 461.2 L533.7 459.7 L533.5 457.9 L533.2 455.8 L533.0 453.7 L532.8 451.5 L532.6 449.3 L532.3 447.1 L532.1 444.8 L531.7 442.6 L531.4 440.3 L531.0 438.1 L530.6 435.8 L530.2 433.5 L529.7 431.2 L529.2 429.0 L528.6 426.7 L527.9 424.5 L527.1 422.3 L526.2 420.1 L525.3 418.0 L524.3 415.9 L523.2 413.9 L522.0 411.8 L520.7 409.8 L519.2 407.8 L517.6 405.8 L515.9 403.8 L514.2 401.9 L512.4 400.1 L510.5 398.3 L508.4 396.4 L506.0 394.4 L503.3 392.2 L500.3 389.8 L496.8 387.2 L492.9 384.3 L488.8 381.3 L484.4 378.2 L479.8 375.0 L475.1 371.7 L470.5 368.4 L466.0 365.1 L461.3 361.8 L456.5 358.3 L451.5 354.8 L446.5 351.3 L441.6 347.8 L436.9 344.2 L432.5 340.8 L428.5 337.5 L424.8 334.3 L421.4 331.2 L418.3 328.3 L415.4 325.3 L412.7 322.4 L410.1 319.3 L407.6 316.1 L405.2 312.7 L402.9 309.3 L400.8 305.7 L398.8 302.0 L397.0 298.2 L395.3 294.3 L393.7 290.3 L392.2 286.2 L390.8 282.0 L389.4 277.7 L388.0 273.2 L386.8 268.4 L385.7 263.6 L384.7 258.7 L383.9 254.1 L383.1 249.6 L382.4 245.6 L381.9 242.1 L381.4 238.9 L381.1 235.9 L380.9 233.1 L380.8 230.3 L380.7 227.6 L380.6 224.7 L380.4 221.6 L380.4 218.3 L380.4 215.1 L380.4 211.9 L380.4 208.7 L380.5 205.6 L380.6 202.5 L380.7 199.2 L380.9 196.0Z" fill="#008787"/>
<path d="M380.9 196.0 L380.8 199.1 L380.7 202.2 L380.6 205.3 L380.6 208.5 L380.6 211.7 L380.6 214.9 L380.6 218.2 L380.7 221.4 L380.9 224.5 L381.0 227.4 L381.1 230.1 L381.3 232.8 L381.5 235.6 L381.8 238.5 L382.2 241.7 L382.8 245.2 L383.5 249.2 L384.3 253.5 L385.2 258.1 L386.2 262.9 L387.3 267.7 L388.5 272.4 L389.9 276.9 L391.4 281.2 L392.8 285.3 L394.4 289.4 L396.0 293.3 L397.7 297.2 L399.6 300.9 L401.6 304.6 L403.8 308.1 L406.2 311.6 L408.6 314.9 L411.2 318.1 L413.8 321.1 L416.7 324.0 L419.7 326.9 L422.9 329.9 L426.3 332.9 L430.0 336.0 L434.1 339.3 L438.5 342.7 L443.2 346.2 L448.1 349.7 L453.1 353.2 L458.0 356.7 L462.9 360.1 L467.5 363.4 L472.0 366.6 L476.7 369.9 L481.3 373.1 L485.9 376.3 L490.2 379.4 L494.4 382.3 L498.2 385.2 L501.6 387.8 L504.6 390.2 L507.3 392.4 L509.6 394.4 L511.7 396.2 L513.6 398.1 L515.3 399.9 L517.0 401.8 L518.6 403.7 L520.2 405.8 L521.6 407.8 L522.9 409.9 L524.0 412.0 L525.1 414.0 L526.0 416.1 L526.9 418.3 L527.8 420.5 L528.5 422.7 L529.2 425.0 L529.7 427.3 L530.2 429.6 L530.6 431.9 L531.0 434.3 L531.4 436.6 L531.8 438.9 L532.1 441.2 L532.4 443.6 L532.7 445.9 L532.9 448.2 L533.1 450.6 L533.3 452.8 L533.6 455.0 L533.8 457.1 L534.0 459.0 L534.2 460.6 L534.4 462.1 L534.5 463.5 L534.7 465.1 L535.0 467.0 L535.2 469.3 L535.6 472.2 L536.1 475.9 L536.6 480.2 L537.2 485.0 L537.9 490.1 L538.6 495.3 L539.2 500.2 L539.7 504.8 L540.2 508.8 L540.5 512.2 L540.8 515.2 L541.1 517.8 L541.3 520.3 L541.5 522.7 L541.6 525.0 L541.8 527.4 L541.9 530.0 L542.0 532.7 L542.1 535.4 L542.1 538.2 L542.1 541.0 L542.1 543.7 L542.1 546.5 L542.1 549.2 L542.1 552.0 L542.0 552.0 L542.0 549.2 L541.9 546.5 L541.9 543.7 L541.8 541.0 L541.7 538.2 L541.7 535.4 L541.5 532.7 L541.4 530.0 L541.3 527.4 L541.1 525.0 L540.9 522.6 L540.7 520.3 L540.5 517.8 L540.2 515.1 L539.9 512.1 L539.5 508.8 L539.0 504.9 L538.4 500.4 L537.8 495.5 L537.1 490.5 L536.4 485.6 L535.7 480.9 L535.1 476.7 L534.7 473.2 L534.3 470.4 L534.0 468.2 L533.8 466.5 L533.6 465.0 L533.4 463.7 L533.2 462.4 L533.0 461.0 L532.8 459.3 L532.6 457.4 L532.4 455.4 L532.1 453.4 L531.9 451.4 L531.7 449.4 L531.4 447.3 L531.0 445.2 L530.6 443.1 L530.2 441.0 L529.7 438.9 L529.2 436.7 L528.7 434.5 L528.1 432.3 L527.5 430.1 L526.7 428.0 L525.8 425.9 L524.8 423.8 L523.8 421.8 L522.7 419.8 L521.5 417.8 L520.2 415.8 L518.8 413.8 L517.2 411.8 L515.5 409.8 L513.8 407.9 L512.0 406.0 L510.1 404.2 L508.0 402.4 L505.8 400.5 L503.3 398.5 L500.6 396.3 L497.5 393.9 L494.0 391.2 L490.1 388.3 L485.8 385.2 L481.4 382.0 L476.8 378.7 L472.1 375.4 L467.4 372.0 L462.9 368.6 L458.2 365.2 L453.3 361.7 L448.3 358.1 L443.3 354.5 L438.4 350.9 L433.7 347.3 L429.4 343.8 L425.4 340.4 L421.8 337.1 L418.6 334.0 L415.6 330.9 L412.8 327.9 L410.3 324.9 L407.9 321.8 L405.5 318.5 L403.3 315.0 L401.1 311.5 L399.1 307.8 L397.2 304.1 L395.5 300.2 L393.9 296.2 L392.4 292.1 L391.0 287.9 L389.7 283.6 L388.3 279.3 L387.0 274.6 L385.9 269.8 L384.8 264.8 L383.9 259.9 L383.0 255.1 L382.3 250.6 L381.7 246.5 L381.1 242.9 L380.8 239.6 L380.5 236.5 L380.3 233.6 L380.2 230.8 L380.1 227.9 L380.0 225.0 L379.9 221.9 L379.9 218.6 L379.9 215.4 L380.1 212.1 L380.2 208.9 L380.4 205.7 L380.6 202.5 L380.7 199.2 L380.9 196.0Z" fill="#008c46"/>
<path d="M380.9 196.0 L380.7 199.2 L380.6 202.5 L380.4 205.7 L380.2 208.9 L380.1 212.0 L380.1 215.2 L380.1 218.5 L380.2 221.7 L380.3 224.8 L380.4 227.7 L380.5 230.6 L380.6 233.4 L380.8 236.2 L381.1 239.2 L381.5 242.5 L382.0 246.1 L382.7 250.1 L383.4 254.6 L384.3 259.3 L385.3 264.2 L386.3 269.1 L387.5 273.9 L388.8 278.5 L390.2 282.8 L391.6 287.0 L393.1 291.2 L394.6 295.2 L396.2 299.2 L398.0 303.0 L399.9 306.8 L402.0 310.4 L404.3 313.9 L406.6 317.3 L409.0 320.5 L411.5 323.6 L414.1 326.6 L417.0 329.6 L420.0 332.6 L423.3 335.7 L426.9 338.9 L430.9 342.3 L435.3 345.8 L440.0 349.3 L444.9 352.9 L449.9 356.5 L454.9 360.0 L459.8 363.5 L464.4 366.9 L469.0 370.2 L473.6 373.5 L478.3 376.9 L482.9 380.1 L487.3 383.3 L491.5 386.3 L495.4 389.2 L498.9 391.9 L501.9 394.3 L504.7 396.5 L507.1 398.5 L509.3 400.4 L511.2 402.2 L513.1 404.0 L514.8 405.8 L516.6 407.8 L518.2 409.8 L519.7 411.8 L521.1 413.8 L522.3 415.8 L523.5 417.9 L524.5 419.9 L525.5 422.0 L526.5 424.1 L527.3 426.2 L528.0 428.4 L528.7 430.6 L529.2 432.9 L529.7 435.1 L530.2 437.3 L530.6 439.5 L531.0 441.7 L531.4 443.9 L531.7 446.0 L532.0 448.2 L532.2 450.4 L532.5 452.5 L532.7 454.6 L532.9 456.6 L533.1 458.6 L533.4 460.3 L533.6 461.8 L533.7 463.2 L533.9 464.5 L534.1 466.0 L534.3 467.8 L534.6 470.1 L535.0 472.9 L535.4 476.4 L536.0 480.7 L536.7 485.4 L537.4 490.4 L538.0 495.4 L538.7 500.3 L539.3 504.9 L539.7 508.8 L540.1 512.1 L540.4 515.1 L540.7 517.8 L540.9 520.3 L541.1 522.6 L541.3 525.0 L541.4 527.4 L541.6 530.0 L541.7 532.7 L541.8 535.4 L541.9 538.2 L541.9 541.0 L541.9 543.7 L542.0 546.5 L542.0 549.2 L542.1 552.0 L542.0 552.0 L541.9 549.2 L541.8 546.5 L541.7 543.7 L541.6 541.0 L541.5 538.2 L541.4 535.4 L541.3 532.7 L541.1 530.0 L540.9 527.4 L540.7 525.0 L540.6 522.6 L540.3 520.2 L540.1 517.7 L539.8 515.1 L539.5 512.1 L539.1 508.8 L538.6 504.9 L538.0 500.5 L537.3 495.7 L536.5 490.8 L535.8 485.9 L535.1 481.4 L534.5 477.2 L534.0 473.8 L533.7 471.1 L533.4 469.0 L533.1 467.4 L532.9 466.0 L532.8 464.8 L532.6 463.6 L532.4 462.3 L532.2 460.7 L531.9 459.0 L531.7 457.2 L531.5 455.4 L531.2 453.5 L531.0 451.6 L530.7 449.7 L530.3 447.8 L529.9 445.9 L529.4 443.9 L528.9 441.9 L528.3 439.8 L527.7 437.8 L527.1 435.7 L526.3 433.6 L525.5 431.5 L524.5 429.5 L523.4 427.5 L522.3 425.5 L521.1 423.6 L519.8 421.6 L518.4 419.7 L516.9 417.7 L515.3 415.8 L513.5 413.8 L511.6 411.9 L509.7 410.1 L507.7 408.3 L505.6 406.5 L503.3 404.7 L500.7 402.7 L497.9 400.5 L494.7 398.0 L491.1 395.3 L487.2 392.3 L482.9 389.1 L478.4 385.9 L473.8 382.5 L469.0 379.0 L464.3 375.5 L459.8 372.1 L455.1 368.6 L450.2 365.0 L445.2 361.4 L440.2 357.7 L435.2 354.0 L430.6 350.3 L426.2 346.7 L422.3 343.2 L418.8 339.9 L415.7 336.7 L412.9 333.6 L410.3 330.5 L407.9 327.4 L405.6 324.2 L403.5 320.9 L401.4 317.4 L399.3 313.7 L397.4 310.0 L395.6 306.1 L394.0 302.2 L392.5 298.1 L391.1 293.9 L389.8 289.6 L388.5 285.2 L387.2 280.8 L386.0 276.1 L384.9 271.2 L383.9 266.1 L383.0 261.1 L382.2 256.2 L381.5 251.6 L380.9 247.4 L380.4 243.7 L380.1 240.3 L379.8 237.1 L379.7 234.2 L379.6 231.2 L379.5 228.3 L379.4 225.3 L379.6 222.0 L379.7 218.7 L379.9 215.4 L380.1 212.1 L380.2 208.9 L380.4 205.7 L380.6 202.5 L380.7 199.2 L380.9 196.0Z" fill="#009600"/>
<path d="M380.9 196.0 L380.7 199.2 L380.6 202.5 L380.4 205.7 L380.2 208.9 L380.1 212.1 L379.9 215.4 L379.7 218.7 L379.6 222.0 L379.7 225.1 L379.8 228.1 L379.9 231.0 L380.0 233.9 L380.2 236.8 L380.4 239.9 L380.8 243.3 L381.3 246.9 L381.9 251.1 L382.6 255.7 L383.4 260.5 L384.4 265.5 L385.4 270.5 L386.5 275.4 L387.8 280.1 L389.1 284.4 L390.4 288.8 L391.7 293.0 L393.2 297.1 L394.8 301.2 L396.4 305.1 L398.2 308.9 L400.2 312.6 L402.4 316.2 L404.5 319.7 L406.7 323.0 L409.1 326.2 L411.6 329.2 L414.2 332.3 L417.2 335.4 L420.3 338.5 L423.9 341.8 L427.8 345.2 L432.2 348.8 L436.8 352.4 L441.7 356.1 L446.7 359.7 L451.7 363.4 L456.6 366.9 L461.3 370.4 L465.9 373.8 L470.6 377.2 L475.3 380.6 L479.9 383.9 L484.4 387.2 L488.6 390.3 L492.6 393.2 L496.1 395.9 L499.2 398.4 L502.0 400.6 L504.5 402.6 L506.8 404.5 L508.9 406.3 L510.8 408.1 L512.7 409.9 L514.5 411.8 L516.2 413.8 L517.8 415.8 L519.3 417.7 L520.7 419.7 L521.9 421.7 L523.1 423.7 L524.1 425.7 L525.1 427.7 L526.1 429.8 L526.9 431.9 L527.6 434.0 L528.2 436.1 L528.8 438.3 L529.3 440.4 L529.8 442.5 L530.2 444.5 L530.7 446.5 L531.0 448.5 L531.3 450.5 L531.6 452.5 L531.8 454.4 L532.0 456.3 L532.3 458.2 L532.5 460.0 L532.7 461.6 L532.9 463.0 L533.1 464.3 L533.3 465.5 L533.4 466.9 L533.7 468.6 L534.0 470.8 L534.4 473.5 L534.8 477.0 L535.4 481.1 L536.1 485.8 L536.8 490.7 L537.5 495.6 L538.2 500.5 L538.8 504.9 L539.3 508.8 L539.7 512.1 L540.0 515.1 L540.3 517.7 L540.5 520.2 L540.7 522.6 L540.9 525.0 L541.1 527.4 L541.2 530.0 L541.4 532.7 L541.5 535.4 L541.6 538.2 L541.7 541.0 L541.8 543.7 L541.8 546.5 L541.9 549.2 L542.0 552.0 L541.9 552.0 L541.8 549.2 L541.6 546.5 L541.5 543.7 L541.4 541.0 L541.3 538.2 L541.1 535.4 L541.0 532.7 L540.8 530.0 L540.6 527.4 L540.4 525.0 L540.2 522.6 L540.0 520.2 L539.7 517.7 L539.4 515.0 L539.1 512.1 L538.6 508.8 L538.1 505.0 L537.5 500.6 L536.8 495.9 L536.0 491.1 L535.3 486.3 L534.6 481.8 L533.9 477.8 L533.4 474.5 L533.0 471.9 L532.7 469.9 L532.5 468.3 L532.3 467.0 L532.1 465.9 L532.0 464.8 L531.8 463.6 L531.5 462.1 L531.3 460.5 L531.1 458.9 L530.8 457.3 L530.6 455.6 L530.3 453.9 L530.0 452.2 L529.6 450.5 L529.1 448.7 L528.6 446.8 L528.0 444.9 L527.4 443.0 L526.7 441.0 L526.0 439.0 L525.2 437.0 L524.2 435.1 L523.2 433.1 L522.0 431.2 L520.8 429.3 L519.5 427.4 L518.1 425.5 L516.6 423.6 L515.0 421.7 L513.3 419.8 L511.4 417.8 L509.4 416.0 L507.4 414.2 L505.4 412.4 L503.1 410.7 L500.7 408.8 L498.1 406.8 L495.2 404.6 L491.9 402.1 L488.3 399.3 L484.3 396.3 L480.0 393.1 L475.4 389.7 L470.7 386.2 L466.0 382.7 L461.3 379.1 L456.6 375.6 L452.0 372.0 L447.0 368.4 L442.0 364.6 L437.0 360.9 L432.1 357.1 L427.4 353.4 L423.1 349.7 L419.2 346.1 L415.9 342.7 L412.9 339.5 L410.2 336.3 L407.7 333.2 L405.5 330.0 L403.4 326.7 L401.4 323.3 L399.5 319.7 L397.5 316.0 L395.7 312.2 L394.0 308.2 L392.5 304.2 L391.1 300.0 L389.8 295.7 L388.6 291.4 L387.4 286.9 L386.1 282.4 L385.0 277.6 L383.9 272.5 L383.0 267.4 L382.1 262.3 L381.4 257.3 L380.7 252.6 L380.2 248.2 L379.7 244.4 L379.4 241.0 L379.2 237.8 L379.0 234.7 L379.0 231.6 L379.2 228.5 L379.4 225.3 L379.6 222.0 L379.7 218.7 L379.9 215.4 L380.1 212.1 L380.2 208.9 L380.4 205.7 L380.6 202.5 L380.7 199.2 L380.9 196.0Z" fill="#469600"/>
<path d="M380.9 196.0 L380.7 199.2 L380.6 202.5 L380.4 205.7 L380.2 208.9 L380.1 212.1 L379.9 215.4 L379.7 218.7 L379.6 222.0 L379.4 225.3 L379.2 228.5 L379.2 231.5 L379.3 234.4 L379.5 237.5 L379.7 240.6 L380.1 244.1 L380.6 247.8 L381.1 252.1 L381.8 256.7 L382.6 261.7 L383.4 266.8 L384.4 271.8 L385.5 276.8 L386.7 281.6 L388.0 286.1 L389.2 290.5 L390.4 294.8 L391.8 299.1 L393.3 303.2 L394.8 307.2 L396.5 311.1 L398.4 314.9 L400.4 318.5 L402.5 322.1 L404.5 325.5 L406.7 328.7 L409.0 331.8 L411.5 335.0 L414.3 338.1 L417.4 341.3 L420.8 344.7 L424.6 348.2 L429.0 351.8 L433.7 355.5 L438.6 359.3 L443.6 363.0 L448.6 366.7 L453.5 370.3 L458.2 373.8 L462.8 377.3 L467.5 380.8 L472.2 384.3 L476.9 387.8 L481.4 391.1 L485.7 394.3 L489.7 397.3 L493.3 400.0 L496.5 402.5 L499.4 404.7 L502.0 406.7 L504.4 408.6 L506.5 410.4 L508.6 412.1 L510.5 413.9 L512.4 415.8 L514.3 417.8 L516.0 419.7 L517.5 421.6 L519.0 423.6 L520.3 425.5 L521.6 427.4 L522.7 429.4 L523.8 431.3 L524.8 433.3 L525.7 435.3 L526.5 437.3 L527.2 439.4 L527.9 441.4 L528.5 443.4 L529.0 445.4 L529.5 447.3 L530.0 449.2 L530.3 451.0 L530.6 452.8 L530.9 454.6 L531.2 456.3 L531.4 458.0 L531.6 459.7 L531.9 461.4 L532.1 462.9 L532.3 464.2 L532.5 465.3 L532.6 466.5 L532.8 467.8 L533.0 469.5 L533.3 471.5 L533.7 474.1 L534.2 477.5 L534.9 481.6 L535.5 486.1 L536.3 490.9 L537.0 495.8 L537.7 500.6 L538.3 505.0 L538.9 508.8 L539.3 512.1 L539.6 515.0 L539.9 517.7 L540.2 520.2 L540.4 522.6 L540.6 525.0 L540.7 527.4 L540.9 530.0 L541.1 532.7 L541.3 535.4 L541.4 538.2 L541.5 541.0 L541.6 543.7 L541.7 546.5 L541.8 549.2 L541.9 552.0 L541.8 552.0 L541.7 549.2 L541.5 546.5 L541.3 543.7 L541.2 541.0 L541.0 538.2 L540.9 535.4 L540.7 532.7 L540.4 530.0 L540.2 527.4 L540.0 524.9 L539.8 522.5 L539.6 520.1 L539.3 517.6 L539.0 515.0 L538.6 512.0 L538.2 508.8 L537.6 505.0 L537.0 500.7 L536.2 496.1 L535.5 491.3 L534.7 486.7 L534.0 482.3 L533.3 478.3 L532.8 475.1 L532.4 472.6 L532.1 470.7 L531.9 469.2 L531.7 468.0 L531.5 467.0 L531.3 466.0 L531.1 464.9 L530.9 463.6 L530.6 462.1 L530.4 460.6 L530.2 459.2 L529.9 457.7 L529.6 456.2 L529.3 454.7 L528.9 453.1 L528.4 451.5 L527.8 449.7 L527.2 448.0 L526.5 446.1 L525.8 444.3 L524.9 442.4 L524.0 440.5 L523.0 438.6 L521.9 436.7 L520.7 434.9 L519.3 433.0 L517.9 431.2 L516.5 429.4 L514.9 427.5 L513.1 425.7 L511.3 423.8 L509.3 421.9 L507.3 420.0 L505.2 418.3 L503.0 416.5 L500.7 414.8 L498.2 412.9 L495.5 410.9 L492.5 408.7 L489.2 406.1 L485.5 403.3 L481.4 400.2 L477.0 397.0 L472.4 393.5 L467.7 389.9 L462.9 386.3 L458.2 382.7 L453.5 379.1 L448.8 375.4 L443.9 371.7 L438.8 367.9 L433.8 364.0 L428.9 360.2 L424.2 356.4 L419.9 352.6 L416.2 349.0 L412.9 345.5 L410.0 342.2 L407.5 339.0 L405.2 335.8 L403.1 332.5 L401.2 329.2 L399.4 325.7 L397.5 322.0 L395.7 318.2 L394.0 314.3 L392.4 310.3 L391.0 306.2 L389.7 301.9 L388.5 297.6 L387.4 293.1 L386.3 288.5 L385.1 284.0 L384.0 279.1 L383.0 273.9 L382.1 268.7 L381.3 263.4 L380.6 258.3 L379.9 253.5 L379.4 249.1 L379.0 245.2 L378.7 241.7 L378.7 238.2 L378.9 234.8 L379.0 231.6 L379.2 228.5 L379.4 225.3 L379.6 222.0 L379.7 218.7 L379.9 215.4 L380.1 212.1 L380.2 208.9 L380.4 205.7 L380.6 202.5 L380.7 199.2 L380.9 196.0Z" fill="#8c9100"/>
<path d="M380.9 196.0 L380.7 199.2 L380.6 202.5 L380.4 205.7 L380.2 208.9 L380.1 212.1 L379.9 215.4 L379.7 218.7 L379.6 222.0 L379.4 225.3 L379.2 228.5 L379.0 231.6 L378.9 234.8 L378.8 238.1 L379.0 241.3 L379.4 244.8 L379.8 248.7 L380.3 253.0 L381.0 257.8 L381.7 262.8 L382.5 268.0 L383.4 273.2 L384.5 278.3 L385.6 283.2 L386.8 287.7 L388.0 292.2 L389.1 296.6 L390.4 301.0 L391.8 305.2 L393.2 309.3 L394.8 313.3 L396.6 317.1 L398.5 320.8 L400.4 324.5 L402.3 327.9 L404.3 331.2 L406.5 334.5 L408.8 337.6 L411.4 340.8 L414.4 344.1 L417.7 347.6 L421.5 351.2 L425.8 354.9 L430.5 358.6 L435.4 362.5 L440.4 366.3 L445.5 370.0 L450.4 373.7 L455.1 377.3 L459.7 380.9 L464.5 384.5 L469.2 388.1 L473.9 391.6 L478.5 395.0 L482.8 398.3 L486.9 401.3 L490.6 404.1 L493.8 406.6 L496.8 408.8 L499.5 410.9 L501.9 412.7 L504.2 414.5 L506.3 416.2 L508.4 418.0 L510.4 419.9 L512.3 421.8 L514.1 423.7 L515.7 425.6 L517.3 427.4 L518.7 429.3 L520.1 431.2 L521.4 433.0 L522.5 434.9 L523.6 436.8 L524.6 438.8 L525.5 440.7 L526.2 442.6 L527.0 444.6 L527.6 446.4 L528.2 448.3 L528.8 450.1 L529.2 451.8 L529.6 453.5 L530.0 455.1 L530.3 456.7 L530.5 458.2 L530.7 459.8 L531.0 461.3 L531.2 462.9 L531.5 464.2 L531.6 465.4 L531.8 466.4 L532.0 467.5 L532.2 468.7 L532.4 470.3 L532.7 472.2 L533.1 474.8 L533.6 478.1 L534.3 482.0 L535.0 486.5 L535.7 491.2 L536.5 496.0 L537.2 500.7 L537.9 505.0 L538.4 508.8 L538.8 512.1 L539.2 515.0 L539.5 517.7 L539.8 520.2 L540.0 522.6 L540.2 524.9 L540.4 527.4 L540.6 530.0 L540.8 532.7 L541.0 535.4 L541.1 538.2 L541.3 541.0 L541.4 543.7 L541.6 546.5 L541.7 549.2 L541.9 552.0 L541.8 552.0 L541.6 549.2 L541.4 546.5 L541.2 543.7 L541.0 541.0 L540.8 538.2 L540.6 535.4 L540.4 532.7 L540.1 530.0 L539.9 527.4 L539.7 524.9 L539.4 522.5 L539.2 520.1 L538.9 517.6 L538.6 514.9 L538.2 512.0 L537.8 508.8 L537.2 505.1 L536.5 500.8 L535.7 496.3 L534.9 491.6 L534.1 487.0 L533.4 482.7 L532.7 478.9 L532.2 475.8 L531.8 473.3 L531.5 471.5 L531.2 470.1 L531.0 469.0 L530.9 468.1 L530.7 467.2 L530.5 466.2 L530.2 465.0 L530.0 463.7 L529.7 462.4 L529.5 461.1 L529.3 459.8 L529.0 458.5 L528.6 457.2 L528.2 455.7 L527.6 454.2 L527.0 452.7 L526.3 451.0 L525.6 449.3 L524.8 447.5 L523.9 445.7 L522.9 443.9 L521.8 442.1 L520.6 440.4 L519.3 438.6 L517.9 436.8 L516.4 435.0 L514.8 433.2 L513.1 431.4 L511.3 429.6 L509.3 427.8 L507.2 425.9 L505.1 424.1 L502.9 422.3 L500.6 420.6 L498.2 418.9 L495.7 417.0 L492.9 415.0 L489.8 412.8 L486.4 410.2 L482.6 407.4 L478.5 404.2 L474.1 400.9 L469.5 397.3 L464.7 393.7 L459.9 390.0 L455.1 386.3 L450.5 382.6 L445.7 378.9 L440.7 375.0 L435.7 371.2 L430.6 367.2 L425.7 363.3 L421.1 359.4 L416.8 355.6 L413.1 351.9 L409.9 348.4 L407.1 345.0 L404.7 341.7 L402.6 338.4 L400.7 335.1 L399.0 331.6 L397.3 328.1 L395.6 324.3 L393.9 320.5 L392.3 316.5 L390.8 312.4 L389.5 308.2 L388.3 303.8 L387.2 299.4 L386.1 294.8 L385.2 290.1 L384.0 285.5 L383.0 280.5 L382.0 275.3 L381.1 270.0 L380.4 264.6 L379.7 259.4 L379.2 254.5 L378.7 250.0 L378.6 245.7 L378.6 241.8 L378.7 238.2 L378.9 234.8 L379.0 231.6 L379.2 228.5 L379.4 225.3 L379.6 222.0 L379.7 218.7 L379.9 215.4 L380.1 212.1 L380.2 208.9 L380.4 205.7 L380.6 202.5 L380.7 199.2 L380.9 196.0Z" fill="#a07800"/>
<path d="M380.9 196.0 L380.7 199.2 L380.6 202.5 L380.4 205.7 L380.2 208.9 L380.1 212.1 L379.9 215.4 L379.7 218.7 L379.6 222.0 L379.4 225.3 L379.2 228.5 L379.0 231.6 L378.9 234.8 L378.7 238.2 L378.6 241.8 L378.7 245.6 L379.1 249.6 L379.6 254.0 L380.1 258.9 L380.8 264.0 L381.6 269.3 L382.5 274.6 L383.5 279.8 L384.5 284.7 L385.7 289.3 L386.8 293.9 L387.8 298.5 L389.0 302.9 L390.3 307.2 L391.6 311.4 L393.1 315.4 L394.8 319.3 L396.6 323.1 L398.3 326.9 L400.1 330.4 L401.9 333.8 L403.9 337.1 L406.1 340.3 L408.6 343.6 L411.4 346.9 L414.6 350.5 L418.4 354.1 L422.6 357.9 L427.3 361.8 L432.2 365.6 L437.2 369.5 L442.3 373.4 L447.3 377.2 L452.0 380.8 L456.7 384.5 L461.4 388.2 L466.2 391.8 L470.9 395.4 L475.6 398.9 L480.0 402.2 L484.1 405.3 L487.8 408.2 L491.1 410.7 L494.2 413.0 L496.9 415.0 L499.5 416.8 L501.8 418.6 L504.1 420.3 L506.2 422.1 L508.3 423.9 L510.3 425.8 L512.2 427.6 L514.0 429.5 L515.6 431.3 L517.2 433.1 L518.6 434.9 L520.0 436.7 L521.2 438.5 L522.4 440.4 L523.5 442.2 L524.4 444.1 L525.3 445.9 L526.0 447.7 L526.7 449.5 L527.4 451.2 L528.0 452.9 L528.5 454.4 L529.0 455.9 L529.3 457.4 L529.6 458.8 L529.8 460.1 L530.1 461.5 L530.3 462.9 L530.6 464.3 L530.8 465.5 L531.0 466.6 L531.2 467.5 L531.3 468.5 L531.5 469.6 L531.8 471.1 L532.1 473.0 L532.5 475.4 L533.0 478.6 L533.7 482.5 L534.4 486.8 L535.2 491.5 L536.0 496.2 L536.7 500.8 L537.4 505.1 L538.0 508.8 L538.4 512.0 L538.8 514.9 L539.1 517.6 L539.4 520.1 L539.6 522.5 L539.8 524.9 L540.1 527.4 L540.3 530.0 L540.5 532.7 L540.7 535.4 L540.9 538.2 L541.1 541.0 L541.3 543.7 L541.4 546.5 L541.6 549.2 L541.8 552.0 L541.7 552.0 L541.4 549.2 L541.2 546.5 L541.0 543.7 L540.8 541.0 L540.6 538.2 L540.3 535.4 L540.1 532.7 L539.8 530.0 L539.5 527.4 L539.3 524.9 L539.1 522.5 L538.8 520.1 L538.5 517.5 L538.2 514.9 L537.8 512.0 L537.3 508.8 L536.7 505.1 L536.0 501.0 L535.2 496.5 L534.4 491.9 L533.6 487.4 L532.8 483.2 L532.1 479.4 L531.6 476.4 L531.1 474.1 L530.8 472.3 L530.6 471.0 L530.4 470.0 L530.2 469.1 L530.1 468.4 L529.9 467.5 L529.6 466.4 L529.3 465.3 L529.1 464.1 L528.9 463.0 L528.6 461.9 L528.3 460.8 L527.9 459.6 L527.5 458.4 L526.9 457.0 L526.2 455.6 L525.5 454.0 L524.7 452.4 L523.8 450.8 L522.8 449.1 L521.7 447.4 L520.6 445.7 L519.3 444.0 L517.9 442.3 L516.4 440.6 L514.8 438.8 L513.1 437.1 L511.3 435.4 L509.4 433.6 L507.3 431.8 L505.2 429.9 L502.9 428.1 L500.7 426.4 L498.3 424.7 L495.8 423.0 L493.1 421.2 L490.2 419.1 L487.1 416.9 L483.6 414.3 L479.8 411.4 L475.6 408.2 L471.2 404.8 L466.5 401.2 L461.7 397.4 L456.8 393.6 L452.0 389.8 L447.4 386.1 L442.6 382.3 L437.6 378.4 L432.5 374.4 L427.4 370.4 L422.5 366.4 L417.9 362.5 L413.7 358.6 L410.0 354.8 L406.9 351.2 L404.3 347.7 L402.0 344.3 L400.1 341.0 L398.4 337.6 L396.8 334.1 L395.2 330.5 L393.7 326.6 L392.1 322.7 L390.6 318.7 L389.2 314.5 L388.0 310.2 L386.9 305.8 L385.9 301.2 L384.9 296.5 L384.0 291.8 L382.9 287.1 L381.9 282.0 L381.0 276.7 L380.2 271.2 L379.5 265.8 L379.1 260.2 L378.9 254.8 L378.7 250.0 L378.6 245.7 L378.6 241.8 L378.7 238.2 L378.9 234.8 L379.0 231.6 L379.2 228.5 L379.4 225.3 L379.6 222.0 L379.7 218.7 L379.9 215.4 L380.1 212.1 L380.2 208.9 L380.4 205.7 L380.6 202.5 L380.7 199.2 L380.9 196.0Z" fill="#a05500"/>
<path d="M380.9 196.0 L380.7 199.2 L380.6 202.5 L380.4 205.7 L380.2 208.9 L380.1 212.1 L379.9 215.4 L379.7 218.7 L379.6 222.0 L379.4 225.3 L379.2 228.5 L379.0 231.6 L378.9 234.8 L378.7 238.2 L378.6 241.8 L378.6 245.7 L378.7 250.0 L378.9 254.8 L379.3 260.0 L380.0 265.2 L380.7 270.6 L381.5 276.0 L382.4 281.3 L383.5 286.3 L384.6 290.9 L385.5 295.7 L386.5 300.3 L387.6 304.8 L388.8 309.2 L390.0 313.5 L391.4 317.6 L393.0 321.6 L394.7 325.5 L396.3 329.3 L397.9 332.9 L399.5 336.3 L401.4 339.7 L403.4 343.0 L405.7 346.3 L408.4 349.8 L411.5 353.3 L415.2 357.1 L419.5 360.9 L424.1 364.9 L429.0 368.8 L434.1 372.8 L439.2 376.7 L444.1 380.6 L448.9 384.3 L453.6 388.0 L458.4 391.8 L463.2 395.6 L468.0 399.3 L472.6 402.8 L477.1 406.2 L481.2 409.4 L485.0 412.3 L488.4 414.8 L491.5 417.1 L494.4 419.1 L497.0 420.9 L499.5 422.7 L501.8 424.4 L504.0 426.1 L506.2 427.9 L508.3 429.8 L510.3 431.6 L512.2 433.4 L513.9 435.2 L515.6 436.9 L517.1 438.7 L518.6 440.4 L519.9 442.2 L521.2 443.9 L522.3 445.7 L523.3 447.4 L524.3 449.2 L525.1 450.9 L525.9 452.5 L526.6 454.1 L527.2 455.6 L527.8 457.1 L528.3 458.4 L528.6 459.7 L528.9 460.9 L529.2 462.1 L529.4 463.3 L529.7 464.5 L529.9 465.7 L530.2 466.8 L530.4 467.8 L530.5 468.6 L530.7 469.5 L530.9 470.5 L531.1 471.9 L531.4 473.7 L531.9 476.1 L532.4 479.2 L533.1 483.0 L533.9 487.2 L534.7 491.8 L535.5 496.4 L536.3 500.9 L536.9 505.1 L537.5 508.8 L538.0 512.0 L538.4 514.9 L538.7 517.6 L539.0 520.1 L539.2 522.5 L539.5 524.9 L539.7 527.4 L540.0 530.0 L540.2 532.7 L540.5 535.4 L540.7 538.2 L540.9 541.0 L541.1 543.7 L541.3 546.5 L541.5 549.2 L541.7 552.0 L541.6 552.0 L541.3 549.2 L541.1 546.5 L540.8 543.7 L540.6 541.0 L540.3 538.2 L540.0 535.4 L539.8 532.7 L539.5 530.0 L539.2 527.4 L538.9 524.9 L538.7 522.5 L538.4 520.0 L538.1 517.5 L537.8 514.8 L537.4 512.0 L536.9 508.8 L536.3 505.2 L535.5 501.1 L534.7 496.7 L533.9 492.2 L533.0 487.8 L532.2 483.6 L531.5 480.0 L530.9 477.0 L530.5 474.8 L530.2 473.1 L529.9 471.9 L529.8 471.0 L529.6 470.2 L529.4 469.5 L529.2 468.8 L529.0 467.9 L528.7 466.8 L528.4 465.9 L528.2 464.9 L527.9 464.0 L527.6 463.1 L527.2 462.1 L526.7 461.0 L526.1 459.8 L525.4 458.5 L524.6 457.1 L523.7 455.6 L522.8 454.0 L521.7 452.5 L520.6 450.8 L519.3 449.2 L518.0 447.6 L516.5 446.0 L514.9 444.3 L513.2 442.7 L511.4 441.0 L509.5 439.3 L507.5 437.5 L505.4 435.8 L503.1 434.0 L500.8 432.2 L498.4 430.5 L495.9 428.8 L493.3 427.1 L490.6 425.3 L487.6 423.3 L484.4 421.0 L480.9 418.4 L477.0 415.4 L472.7 412.2 L468.2 408.7 L463.5 405.0 L458.7 401.2 L453.8 397.3 L449.0 393.4 L444.3 389.6 L439.5 385.7 L434.4 381.7 L429.3 377.7 L424.2 373.6 L419.3 369.5 L414.7 365.5 L410.5 361.5 L406.9 357.7 L403.9 354.0 L401.4 350.4 L399.3 347.0 L397.5 343.6 L396.0 340.1 L394.6 336.6 L393.2 332.9 L391.8 328.9 L390.3 325.0 L388.9 320.8 L387.7 316.6 L386.5 312.2 L385.5 307.7 L384.6 303.0 L383.7 298.3 L382.9 293.4 L381.9 288.6 L380.9 283.5 L380.3 277.7 L379.9 271.7 L379.5 265.8 L379.1 260.2 L378.9 254.8 L378.7 250.0 L378.6 245.7 L378.6 241.8 L378.7 238.2 L378.9 234.8 L379.0 231.6 L379.2 228.5 L379.4 225.3 L379.6 222.0 L379.7 218.7 L379.9 215.4 L380.1 212.1 L380.2 208.9 L380.4 205.7 L380.6 202.5 L380.7 199.2 L380.9 196.0Z" fill="#a03200"/>
<path d="M380.9 196.0 L380.7 199.2 L380.6 202.5 L380.4 205.7 L380.2 208.9 L380.1 212.1 L379.9 215.4 L379.7 218.7 L379.6 222.0 L379.4 225.3 L379.2 228.5 L379.0 231.6 L378.9 234.8 L378.7 238.2 L378.6 241.8 L378.6 245.7 L378.7 250.0 L378.9 254.8 L379.1 260.2 L379.5 265.8 L379.9 271.7 L380.6 277.4 L381.4 282.7 L382.4 287.9 L383.5 292.6 L384.3 297.4 L385.2 302.1 L386.2 306.7 L387.3 311.2 L388.5 315.5 L389.7 319.8 L391.2 323.8 L392.7 327.8 L394.2 331.7 L395.7 335.4 L397.2 338.9 L398.8 342.3 L400.7 345.7 L402.8 349.1 L405.4 352.6 L408.5 356.2 L412.1 360.0 L416.3 364.0 L420.9 368.0 L425.8 372.0 L430.9 376.1 L436.0 380.1 L441.0 384.0 L445.8 387.8 L450.5 391.6 L455.3 395.5 L460.2 399.3 L465.0 403.1 L469.7 406.7 L474.2 410.2 L478.4 413.4 L482.2 416.3 L485.7 418.9 L488.9 421.2 L491.8 423.2 L494.6 425.1 L497.1 426.8 L499.5 428.5 L501.9 430.2 L504.1 431.9 L506.4 433.8 L508.4 435.6 L510.4 437.3 L512.3 439.0 L514.0 440.7 L515.6 442.4 L517.2 444.1 L518.6 445.8 L520.0 447.4 L521.2 449.1 L522.3 450.8 L523.3 452.4 L524.2 454.0 L525.0 455.6 L525.8 457.0 L526.5 458.4 L527.1 459.7 L527.6 460.9 L528.0 461.9 L528.3 463.0 L528.5 464.0 L528.8 465.0 L529.0 466.0 L529.3 467.1 L529.5 468.1 L529.7 468.9 L529.9 469.7 L530.1 470.5 L530.3 471.4 L530.5 472.7 L530.8 474.4 L531.2 476.7 L531.8 479.7 L532.5 483.4 L533.3 487.6 L534.1 492.0 L535.0 496.6 L535.8 501.0 L536.5 505.2 L537.1 508.8 L537.6 512.0 L538.0 514.8 L538.3 517.5 L538.6 520.0 L538.9 522.5 L539.1 524.9 L539.4 527.4 L539.6 530.0 L539.9 532.7 L540.2 535.4 L540.4 538.2 L540.7 541.0 L540.9 543.7 L541.2 546.5 L541.4 549.2 L541.6 552.0 L541.5 552.0 L541.2 549.2 L541.0 546.5 L540.7 543.7 L540.4 541.0 L540.1 538.2 L539.8 535.4 L539.5 532.7 L539.2 530.0 L538.9 527.4 L538.6 524.9 L538.3 522.4 L538.0 520.0 L537.7 517.4 L537.4 514.8 L536.9 511.9 L536.4 508.8 L535.8 505.2 L535.0 501.2 L534.2 496.9 L533.3 492.4 L532.4 488.1 L531.6 484.1 L530.9 480.5 L530.3 477.7 L529.9 475.5 L529.5 473.9 L529.3 472.8 L529.1 472.0 L529.0 471.3 L528.8 470.7 L528.6 470.1 L528.3 469.3 L528.0 468.4 L527.8 467.6 L527.5 466.9 L527.3 466.1 L526.9 465.4 L526.5 464.6 L526.0 463.7 L525.4 462.6 L524.6 461.4 L523.8 460.1 L522.8 458.8 L521.8 457.3 L520.7 455.8 L519.5 454.3 L518.1 452.7 L516.7 451.2 L515.1 449.6 L513.4 448.1 L511.6 446.5 L509.7 444.8 L507.7 443.2 L505.6 441.5 L503.4 439.8 L501.0 438.0 L498.6 436.3 L496.1 434.6 L493.6 432.9 L490.9 431.2 L488.0 429.4 L485.0 427.4 L481.7 425.1 L478.1 422.5 L474.1 419.5 L469.8 416.2 L465.3 412.6 L460.5 408.8 L455.6 404.9 L450.7 400.9 L445.9 397.0 L441.2 393.1 L436.3 389.1 L431.3 385.1 L426.2 381.0 L421.1 376.8 L416.1 372.6 L411.5 368.5 L407.4 364.5 L403.8 360.6 L400.9 356.8 L398.5 353.2 L396.6 349.7 L395.0 346.2 L393.6 342.7 L392.3 339.1 L391.1 335.3 L389.9 331.2 L388.4 327.2 L387.2 323.0 L386.1 318.7 L385.0 314.2 L384.1 309.6 L383.3 304.8 L382.6 299.8 L382.0 294.7 L381.4 289.3 L380.8 283.6 L380.3 277.7 L379.9 271.7 L379.5 265.8 L379.1 260.2 L378.9 254.8 L378.7 250.0 L378.6 245.7 L378.6 241.8 L378.7 238.2 L378.9 234.8 L379.0 231.6 L379.2 228.5 L379.4 225.3 L379.6 222.0 L379.7 218.7 L379.9 215.4 L380.1 212.1 L380.2 208.9 L380.4 205.7 L380.6 202.5 L380.7 199.2 L380.9 196.0Z" fill="#aa0a00"/>
<path d="M380.9 196.0 L380.7 199.2 L380.6 202.5 L380.4 205.7 L380.2 208.9 L380.1 212.1 L379.9 215.4 L379.7 218.7 L379.6 222.0 L379.4 225.3 L379.2 228.5 L379.0 231.6 L378.9 234.8 L378.7 238.2 L378.6 241.8 L378.6 245.7 L378.7 250.0 L378.9 254.8 L379.1 260.2 L379.5 265.8 L379.9 271.7 L380.3 277.7 L380.8 283.6 L381.4 289.3 L382.3 294.2 L383.1 299.1 L383.9 303.9 L384.8 308.6 L385.8 313.2 L386.9 317.6 L388.0 321.9 L389.4 326.1 L390.8 330.1 L392.2 334.1 L393.4 337.8 L394.8 341.4 L396.3 344.9 L398.0 348.3 L400.0 351.8 L402.4 355.4 L405.4 359.1 L409.0 363.0 L413.1 367.0 L417.7 371.1 L422.7 375.2 L427.7 379.3 L432.9 383.4 L437.9 387.4 L442.7 391.3 L447.4 395.2 L452.3 399.1 L457.2 403.0 L462.0 406.9 L466.7 410.6 L471.3 414.2 L475.6 417.5 L479.5 420.4 L483.0 423.0 L486.3 425.3 L489.3 427.3 L492.1 429.2 L494.8 430.9 L497.3 432.6 L499.7 434.2 L502.1 436.0 L504.4 437.8 L506.6 439.5 L508.6 441.2 L510.6 442.9 L512.4 444.6 L514.1 446.2 L515.8 447.8 L517.3 449.4 L518.7 451.0 L520.0 452.6 L521.2 454.1 L522.3 455.7 L523.3 457.2 L524.2 458.6 L525.0 460.0 L525.8 461.2 L526.4 462.3 L526.9 463.3 L527.3 464.2 L527.6 465.1 L527.9 465.9 L528.1 466.7 L528.4 467.6 L528.6 468.6 L528.9 469.4 L529.1 470.1 L529.3 470.8 L529.4 471.5 L529.6 472.3 L529.9 473.5 L530.2 475.2 L530.6 477.4 L531.2 480.3 L531.9 483.9 L532.7 487.9 L533.6 492.3 L534.5 496.8 L535.3 501.1 L536.0 505.2 L536.6 508.8 L537.1 511.9 L537.6 514.8 L537.9 517.5 L538.2 520.0 L538.5 522.4 L538.8 524.9 L539.0 527.4 L539.3 530.0 L539.6 532.7 L539.9 535.4 L540.2 538.2 L540.5 541.0 L540.7 543.7 L541.0 546.5 L541.3 549.2 L541.6 552.0 L541.5 552.0 L541.2 549.2 L540.9 546.5 L540.6 543.7 L540.3 541.0 L540.0 538.2 L539.6 535.4 L539.3 532.7 L539.0 530.0 L538.7 527.4 L538.4 524.9 L538.1 522.4 L537.8 519.9 L537.5 517.4 L537.1 514.8 L536.7 511.9 L536.2 508.8 L535.6 505.3 L534.8 501.2 L533.9 497.0 L533.0 492.6 L532.2 488.3 L531.3 484.3 L530.6 480.8 L530.0 478.0 L529.6 475.9 L529.2 474.3 L529.0 473.2 L528.8 472.4 L528.6 471.9 L528.5 471.3 L528.3 470.7 L528.0 470.0 L527.7 469.2 L527.5 468.5 L527.2 467.8 L526.9 467.2 L526.6 466.5 L526.2 465.8 L525.7 465.0 L525.0 464.0 L524.2 462.9 L523.3 461.6 L522.4 460.3 L521.3 458.9 L520.2 457.5 L518.9 456.0 L517.5 454.5 L516.0 453.0 L514.4 451.5 L512.7 449.9 L510.8 448.4 L508.9 446.8 L506.8 445.1 L504.7 443.5 L502.4 441.8 L500.0 440.0 L497.5 438.3 L495.0 436.6 L492.4 435.0 L489.7 433.3 L486.8 431.5 L483.7 429.4 L480.3 427.1 L476.7 424.5 L472.7 421.5 L468.4 418.1 L463.8 414.5 L459.0 410.7 L454.1 406.8 L449.2 402.8 L444.3 398.8 L439.6 394.8 L434.8 390.8 L429.7 386.7 L424.6 382.6 L419.5 378.4 L414.5 374.2 L409.9 370.0 L405.8 366.0 L402.3 362.0 L399.4 358.2 L397.1 354.6 L395.2 351.0 L393.7 347.5 L392.4 344.0 L391.2 340.3 L390.1 336.5 L388.9 332.4 L387.7 328.1 L386.6 323.7 L385.7 319.2 L384.8 314.5 L384.0 309.7 L383.3 304.8 L382.6 299.8 L382.0 294.7 L381.4 289.3 L380.8 283.6 L380.3 277.7 L379.9 271.7 L379.5 265.8 L379.1 260.2 L378.9 254.8 L378.7 250.0 L378.6 245.7 L378.6 241.8 L378.7 238.2 L378.9 234.8 L379.0 231.6 L379.2 228.5 L379.4 225.3 L379.6 222.0 L379.7 218.7 L379.9 215.4 L380.1 212.1 L380.2 208.9 L380.4 205.7 L380.6 202.5 L380.7 199.2 L380.9 196.0Z" fill="#820000"/>
<defs><linearGradient id="shd" gradientUnits="userSpaceOnUse" x1="380.0" y1="190.0" x2="441.2" y2="345.6"><stop offset="0" stop-color="#000020" stop-opacity=".72"/><stop offset=".45" stop-color="#000020" stop-opacity=".5"/><stop offset=".8" stop-color="#000020" stop-opacity=".28"/><stop offset="1" stop-color="#000020" stop-opacity="0"/></linearGradient></defs>
<path d="M381.6 192.0 L381.8 195.5 L382.0 199.2 L382.3 202.8 L382.5 206.5 L382.7 210.0 L382.9 213.5 L383.2 216.8 L383.5 220.0 L383.8 222.9 L384.0 225.4 L384.2 227.8 L384.5 230.1 L384.8 232.5 L385.2 235.0 L385.8 237.7 L386.5 240.8 L387.4 244.3 L388.4 248.2 L389.5 252.3 L390.8 256.5 L392.1 260.8 L393.6 265.0 L395.2 269.1 L397.0 273.0 L398.9 276.7 L400.9 280.2 L403.0 283.7 L405.2 287.2 L407.6 290.5 L410.1 293.8 L412.9 296.9 L415.8 300.0 L418.9 302.9 L422.3 305.7 L425.8 308.4 L429.4 311.0 L433.2 313.5 L437.2 316.1 L441.2 318.8 L445.4 321.6 L449.8 324.5 L454.4 327.6 L459.1 330.6 L464.0 333.8 L468.9 336.9 L424.6 382.6 L419.5 378.4 L414.5 374.2 L409.9 370.0 L405.8 366.0 L402.3 362.0 L399.4 358.2 L397.1 354.6 L395.2 351.0 L393.7 347.5 L392.4 344.0 L391.2 340.3 L390.1 336.5 L388.9 332.4 L387.7 328.1 L386.6 323.7 L385.7 319.2 L384.8 314.5 L384.0 309.7 L383.3 304.8 L382.6 299.8 L382.0 294.7 L381.4 289.3 L380.8 283.6 L380.3 277.7 L379.9 271.7 L379.5 265.8 L379.1 260.2 L378.9 254.8 L378.7 250.0 L378.6 245.7 L378.6 241.8 L378.7 238.2 L378.9 234.8 L379.0 231.6 L379.2 228.5 L379.4 225.3 L379.6 222.0 L379.7 218.7 L379.9 215.4 L380.1 212.1 L380.2 208.9 L380.4 205.7 L380.6 202.5 L380.7 199.2 L380.9 196.0Z" fill="url(#shd)"/>
<defs><linearGradient id="shd2" gradientUnits="userSpaceOnUse" x1="0" y1="460.9" x2="0" y2="505.9"><stop offset="0" stop-color="#000020" stop-opacity="0"/><stop offset="1" stop-color="#000020" stop-opacity=".6"/></linearGradient></defs>
<path d="M535.1 413.3 L535.2 416.2 L535.3 419.1 L535.4 422.0 L535.5 425.0 L535.7 428.1 L535.8 431.2 L536.0 434.5 L536.2 437.7 L536.4 441.0 L536.6 444.1 L536.8 447.1 L537.0 450.0 L537.2 452.5 L537.4 454.7 L537.5 456.7 L537.7 458.6 L537.9 460.6 L538.1 462.9 L538.4 465.7 L538.7 469.0 L539.1 473.1 L539.5 477.9 L540.1 483.2 L540.6 488.8 L541.1 494.3 L541.6 499.7 L542.0 504.6 L542.4 508.8 L542.7 512.3 L542.9 515.4 L543.1 518.1 L543.2 520.5 L543.4 522.8 L543.4 525.1 L543.5 527.4 L543.5 530.0 L543.5 532.7 L543.4 535.4 L543.3 538.2 L543.1 541.0 L543.0 543.7 L542.8 546.5 L542.6 549.2 L542.5 552.0 L541.5 552.0 L541.2 549.2 L540.9 546.5 L540.6 543.7 L540.3 541.0 L540.0 538.2 L539.6 535.4 L539.3 532.7 L539.0 530.0 L538.7 527.4 L538.4 524.9 L538.1 522.4 L537.8 519.9 L537.5 517.4 L537.1 514.8 L536.7 511.9 L536.2 508.8 L535.6 505.3 L534.8 501.2 L533.9 497.0 L533.0 492.6 L532.2 488.3 L531.3 484.3 L530.6 480.8 L530.0 478.0 L529.6 475.9 L529.2 474.3 L529.0 473.2 L528.8 472.4 L528.6 471.9 L528.5 471.3 L528.3 470.7 L528.0 470.0 L527.7 469.2 L527.5 468.5 L527.2 467.8 L526.9 467.2 L526.6 466.5 L526.2 465.8 L525.7 465.0 L525.0 464.0 L524.2 462.9 L523.3 461.6 L522.4 460.3 L521.3 458.9Z" fill="url(#shd2)"/>
<path d="M197.8 166.3 L197.6 168.0 L197.5 169.8 L197.3 171.5 L197.2 173.3 L197.0 175.0 L196.8 176.7 L196.7 178.4 L196.5 180.0 L196.3 181.5 L196.1 183.0 L195.9 184.4 L195.7 185.7 L195.5 187.1 L195.3 188.6 L195.1 190.2 L194.9 192.0 L194.7 194.0 L194.4 196.1 L194.2 198.3 L193.9 200.6 L193.7 202.9 L193.4 205.3 L193.2 207.7 L193.0 210.0 L192.8 212.3 L192.7 214.4 L192.5 216.6 L192.4 218.8 L192.2 221.0 L192.1 223.5 L192.0 226.1 L191.9 229.0 L191.8 232.3 L191.6 236.0 L191.4 239.9 L191.2 243.9 L191.1 248.0 L191.1 251.9 L191.1 255.7 L191.2 259.0 L191.4 262.0 L191.7 264.8 L192.1 267.4 L192.5 269.8 L193.0 272.2 L193.6 274.4 L194.2 276.7 L194.9 279.0 L195.6 281.2 L196.3 283.3 L197.1 285.3 L197.9 287.3 L198.8 289.3 L199.8 291.4 L201.0 293.6 L202.3 296.0 L203.7 298.6 L205.3 301.3 L206.9 304.2 L208.7 307.1 L210.6 310.1 L212.6 313.0 L214.8 315.9 L217.2 318.6 L219.8 321.2 L222.7 323.8 L225.7 326.4 L228.9 328.9 L232.1 331.4 L235.4 333.8 L238.8 336.1 L242.0 338.4 L245.2 340.6 L248.5 342.7 L251.8 344.7 L255.1 346.7 L258.5 348.6 L261.8 350.6 L265.2 352.5 L268.5 354.5 L268.5 354.5 L270.8 356.0 L273.1 357.5 L275.4 359.0 L277.7 360.5 L280.0 362.0 L282.3 363.5 L284.6 365.0 L287.0 366.5 L289.4 368.0 L291.7 369.5 L294.1 371.0 L296.5 372.5 L298.9 374.0 L301.4 375.5 L303.8 377.0 L306.3 378.6 L308.8 380.2 L311.5 381.8 L314.1 383.4 L316.8 385.1 L319.5 386.7 L322.0 388.3 L324.5 389.9 L326.8 391.5 L329.0 393.1 L331.2 394.6 L333.3 396.2 L335.3 397.7 L337.2 399.2 L338.9 400.7 L340.5 402.1 L341.9 403.4 L343.1 404.6 L344.0 405.7 L344.8 406.8 L345.4 407.8 L346.0 408.8 L346.4 409.8 L346.9 410.8 L347.3 411.8 L347.7 412.8 L348.0 413.7 L348.2 414.5 L348.4 415.3 L348.6 416.3 L348.7 417.4 L348.8 418.7 L348.9 420.4 L349.0 422.4 L349.0 424.7 L349.0 427.2 L349.0 429.9 L349.0 432.7 L349.0 435.6 L349.0 438.3 L349.0 441.0 L348.5 460.0 L346.4 495.6 L400.0 495.9 L406.0 497.2 L410.0 500.5 L412.0 505.0 L412.3 505.0 L412.1 501.7 L412.0 498.3 L411.9 494.9 L411.7 491.6 L411.6 488.2 L411.4 484.9 L411.2 481.6 L411.0 478.4 L410.8 475.2 L410.5 472.1 L410.2 469.0 L409.9 465.9 L409.6 462.9 L409.2 459.8 L408.9 456.8 L408.5 453.7 L408.1 450.6 L407.8 447.4 L407.4 444.2 L407.0 441.1 L406.6 437.9 L406.1 434.8 L405.5 431.9 L404.8 429.0 L404.0 426.3 L403.2 423.6 L402.2 421.0 L401.2 418.5 L400.1 416.1 L398.9 413.7 L397.5 411.3 L396.0 409.0 L394.3 406.7 L392.5 404.5 L390.6 402.4 L388.6 400.3 L386.4 398.2 L384.0 396.1 L381.5 394.0 L378.8 391.7 L375.9 389.4 L372.9 387.1 L369.8 384.7 L366.4 382.3 L362.9 379.9 L359.3 377.4 L355.5 374.7 L351.5 372.0 L347.2 369.1 L342.7 366.1 L337.8 363.0 L332.9 359.8 L327.9 356.6 L323.0 353.4 L318.4 350.2 L314.0 347.0 L309.8 343.9 L305.8 340.7 L301.8 337.5 L298.0 334.3 L294.3 331.2 L290.8 328.0 L287.6 325.0 L284.6 322.0 L281.9 319.1 L279.4 316.4 L277.2 313.7 L275.1 311.0 L273.2 308.3 L271.5 305.6 L270.0 302.9 L268.5 300.0 L267.2 297.0 L266.1 293.9 L265.2 290.7 L264.4 287.4 L263.8 284.2 L263.2 281.0 L262.6 278.0 L262.0 275.0 L261.4 272.2 L261.0 269.5 L260.6 266.8 L260.2 264.2 L259.9 261.7 L259.5 259.2 L259.2 256.6 L258.8 254.0 L256.8 229.3 L254.3 204.6 L252.0 180.0 L251.0 174.0 L248.0 169.5 L242.0 167.3 L234.0 166.5Z" fill="#000058"/>
</svg><div class="vt" style="left:16px;top:11px">Z TDisp (mm)</div>
<div class="abs" style="left:54px;top:29px;width:48px;height:1px;background:#000"></div>
<div class="abs" style="left:23px;top:43px;width:14px;height:11px;background:#800000"></div>
<div class="abs" style="left:23px;top:54px;width:14px;height:10px;background:#d00000"></div>
<div class="abs" style="left:23px;top:64px;width:14px;height:11px;background:#ff2800"></div>
<div class="abs" style="left:23px;top:75px;width:14px;height:11px;background:#ff7800"></div>
<div class="abs" style="left:23px;top:86px;width:14px;height:10px;background:#ffb400"></div>
<div class="abs" style="left:23px;top:96px;width:14px;height:11px;background:#ffff00"></div>
<div class="abs" style="left:23px;top:107px;width:14px;height:10px;background:#80ff00"></div>
<div class="abs" style="left:23px;top:117px;width:14px;height:11px;background:#00e000"></div>
<div class="abs" style="left:23px;top:128px;width:14px;height:11px;background:#00ff80"></div>
<div class="abs" style="left:23px;top:139px;width:14px;height:10px;background:#00ffff"></div>
<div class="abs" style="left:23px;top:149px;width:14px;height:11px;background:#00b4ff"></div>
<div class="abs" style="left:23px;top:160px;width:14px;height:11px;background:#0078ff"></div>
<div class="abs" style="left:23px;top:171px;width:14px;height:10px;background:#0028ff"></div>
<div class="abs" style="left:23px;top:181px;width:14px;height:11px;background:#0000c8"></div>
<div class="abs" style="left:23px;top:192px;width:14px;height:10px;background:#000080"></div>
<div class="vt" style="left:43px;top:32.8px">40.109</div>
<div class="abs" style="left:36px;top:42px;width:2px;height:1px;background:#000"></div>
<div class="vt" style="left:43px;top:50.5px">35.653</div>
<div class="abs" style="left:36px;top:60px;width:2px;height:1px;background:#000"></div>
<div class="vt" style="left:43px;top:68.2px">31.196</div>
<div class="abs" style="left:36px;top:77px;width:2px;height:1px;background:#000"></div>
<div class="vt" style="left:43px;top:86.0px">26.74</div>
<div class="abs" style="left:36px;top:95px;width:2px;height:1px;background:#000"></div>
<div class="vt" style="left:43px;top:103.7px">22.283</div>
<div class="abs" style="left:36px;top:113px;width:2px;height:1px;background:#000"></div>
<div class="vt" style="left:43px;top:121.4px">17.827</div>
<div class="abs" style="left:36px;top:131px;width:2px;height:1px;background:#000"></div>
<div class="vt" style="left:43px;top:139.1px">13.371</div>
<div class="abs" style="left:36px;top:148px;width:2px;height:1px;background:#000"></div>
<div class="vt" style="left:43px;top:156.9px">8.9143</div>
<div class="abs" style="left:36px;top:166px;width:2px;height:1px;background:#000"></div>
<div class="vt" style="left:43px;top:174.6px">4.4579</div>
<div class="abs" style="left:36px;top:184px;width:2px;height:1px;background:#000"></div>
<div class="vt" style="left:43px;top:192.3px">0.0015118</div>
<div class="abs" style="left:36px;top:201px;width:2px;height:1px;background:#000"></div>
<div class="vt" style="left:421px;top:699.0px">step 0.0047427</div>
<div class="vt" style="left:421px;top:718.5px">Contour Fill of Total Disp., Z TDisp (mm).</div>
<div class="vt" style="left:421px;top:738.0px">Deformation ( x1): Stage Disp. of Time Step, step 0.0047427.</div>
<svg class="abs" style="left:29px;top:714px" width="60" height="45" viewBox="60 808 60 45" shape-rendering="crispEdges">
<path d="M64 820 L88.5 819 L64.5 841Z" fill="#00ff00"/>
<path d="M64 820 L78 819.5 L88.5 819 L67 833.5 L64 833Z" fill="#ff0000"/>
<rect x="64" y="827" width="1.2" height="13.5" fill="#ffff00"/>
<g font-family="Liberation Serif,serif" font-weight="bold" font-size="13.5" fill="#000" shape-rendering="auto">
<text x="94.5" y="819.4" textLength="8.5" lengthAdjust="spacingAndGlyphs">x</text>
<text x="65" y="836" textLength="7.5" lengthAdjust="spacingAndGlyphs">y</text>
<text x="66" y="847.3" textLength="6.5" lengthAdjust="spacingAndGlyphs">z</text></g></svg>
</div>
<div id="bottom" class="abs">
<!-- coordinates relative to bottom panel origin (0,853) -->
<div class="abs" style="left:0;top:0;width:1280px;height:1px;background:#c4bfb8"></div>
<!-- outer groove frame: page x0..1193, y854..905 -->
<div class="abs" style="left:0;top:1px;width:1194px;height:52px;border:1px solid #808080;border-right-color:#fff;border-bottom-color:#fff"></div>
<div class="abs" style="left:1px;top:2px;width:1192px;height:50px;border:1px solid #fff;border-right-color:#808080;border-bottom-color:#808080"></div>
<!-- inner groove frame: page x3..1174, y857..902 -->
<div class="abs" style="left:3px;top:4px;width:1172px;height:46px;border:2px solid #75736c;border-right-color:#fff;border-bottom-color:#fff"></div>
<div class="abs" style="left:5px;top:6px;width:1168px;height:42px;border:2px solid #fff;border-right-color:#75736c;border-bottom-color:#75736c"></div>
<div class="abs msg" style="left:7px;top:7.4px">Pick LEFTMOUSE to desplace view (ESC to quit) ( if present, mouse wheel zooms)</div>
<div class="abs msg" style="left:7px;top:21.4px">Pick LEFTMOUSE to desplace view (ESC to quit).</div>
<!-- scrollbar x1176..1191 y857..903 -->
<div class="abs" style="left:1176px;top:4px;width:16px;height:47px;background:#ece9e4"></div>
<div class="abs sbtn" style="left:1176px;top:4px;width:16px;height:15px"><svg width="12" height="11" viewBox="0 0 12 11" style="position:absolute;left:0;top:0"><path d="M2.5 7.5 L6 4 L9.5 7.5Z" fill="#000"/></svg></div>
<div class="abs sbtn" style="left:1176px;top:28px;width:16px;height:7px"></div>
<div class="abs sbtn" style="left:1176px;top:35px;width:16px;height:16px"><svg width="12" height="12" viewBox="0 0 12 12" style="position:absolute;left:0;top:0"><path d="M2.5 4.5 L6 8 L9.5 4.5Z" fill="#000"/></svg></div>
<!-- command row -->
<div class="abs msg" style="left:10px;top:58px;letter-spacing:-0.45px">Command:</div>
<div class="abs" style="left:73px;top:56px;width:1076px;height:17px;background:#fff;border:1px solid #a9a69f;border-right-color:#e8e6e1;border-bottom-color:#e8e6e1"></div>
<!-- coordinate panel x1195..1278 -->
<div class="abs" style="left:1195px;top:1px;width:84px;height:74px;border-left:1px solid #fff;border-top:1px solid #fff;border-right:1px solid #808080;background:#d4d0c8"></div>
<div class="abs msg" style="left:1201px;top:6px">x=407.33</div>
<div class="abs msg" style="left:1201px;top:25px">y=431.25</div>
<div class="abs msg" style="left:1201px;top:44px">z=0</div>
<svg class="abs" style="left:1152px;top:55px" width="42" height="20" viewBox="1152 908 42 20">
<path d="M1155.3 913.5 L1157 912 L1168 912 L1168 910.8 L1170.3 911.2 L1169.2 912.5 L1169.2 925.5 L1166.5 925.5 L1165.5 923.5 L1163.5 923.8 L1163 926 L1155.3 926Z" fill="#444"/>
<rect x="1161.5" y="913.2" width="6" height="2.2" fill="#999"/>
<circle cx="1158.8" cy="916.3" r="2" fill="#888"/>
<g fill="#fff"><rect x="1156.2" y="914.8" width="1" height="1"/><rect x="1157.8" y="913.6" width="1" height="1"/><rect x="1159.6" y="913.6" width="1" height="1"/><rect x="1161" y="915" width="1" height="1"/><rect x="1156" y="917" width="1" height="1"/><rect x="1161" y="917" width="1" height="1"/><rect x="1164" y="917" width="1" height="1"/><rect x="1166" y="917" width="1" height="1"/><rect x="1157" y="919" width="1" height="1"/><rect x="1159" y="919" width="1" height="1"/>
<rect x="1156.5" y="921" width="1" height="1.2"/><rect x="1158.8" y="921" width="1" height="1.2"/><rect x="1161" y="921" width="1" height="1.2"/><rect x="1163" y="921" width="1" height="1.2"/><rect x="1156.8" y="923.3" width="1" height="2"/><rect x="1158.8" y="923.3" width="1" height="2"/><rect x="1160.8" y="923.3" width="1" height="2"/></g>
<rect x="1174" y="910" width="16" height="16" fill="#e2ded6"/>
<path d="M1174.5 910 V926 M1178.5 910 V926 M1182.5 910 V926 M1186.5 910 V926 M1189.5 910 V926 M1174 910.5 H1190 M1174 914.5 H1190 M1174 918.5 H1190 M1174 922.5 H1190 M1174 925.5 H1190" stroke="#c4c8cc" stroke-width="1"/>
<path d="M1182.5 911 V913.5 M1182.5 915 V922 M1182.5 923.5 V926 M1175 918.5 H1177.5 M1179 918.5 H1186 M1187.5 918.5 H1189.5" stroke="#000" stroke-width="1.2"/>
</svg>
<div class="abs" style="left:1194px;top:1px;width:1px;height:74px;background:#808080"></div>

</div>
</body></html>
